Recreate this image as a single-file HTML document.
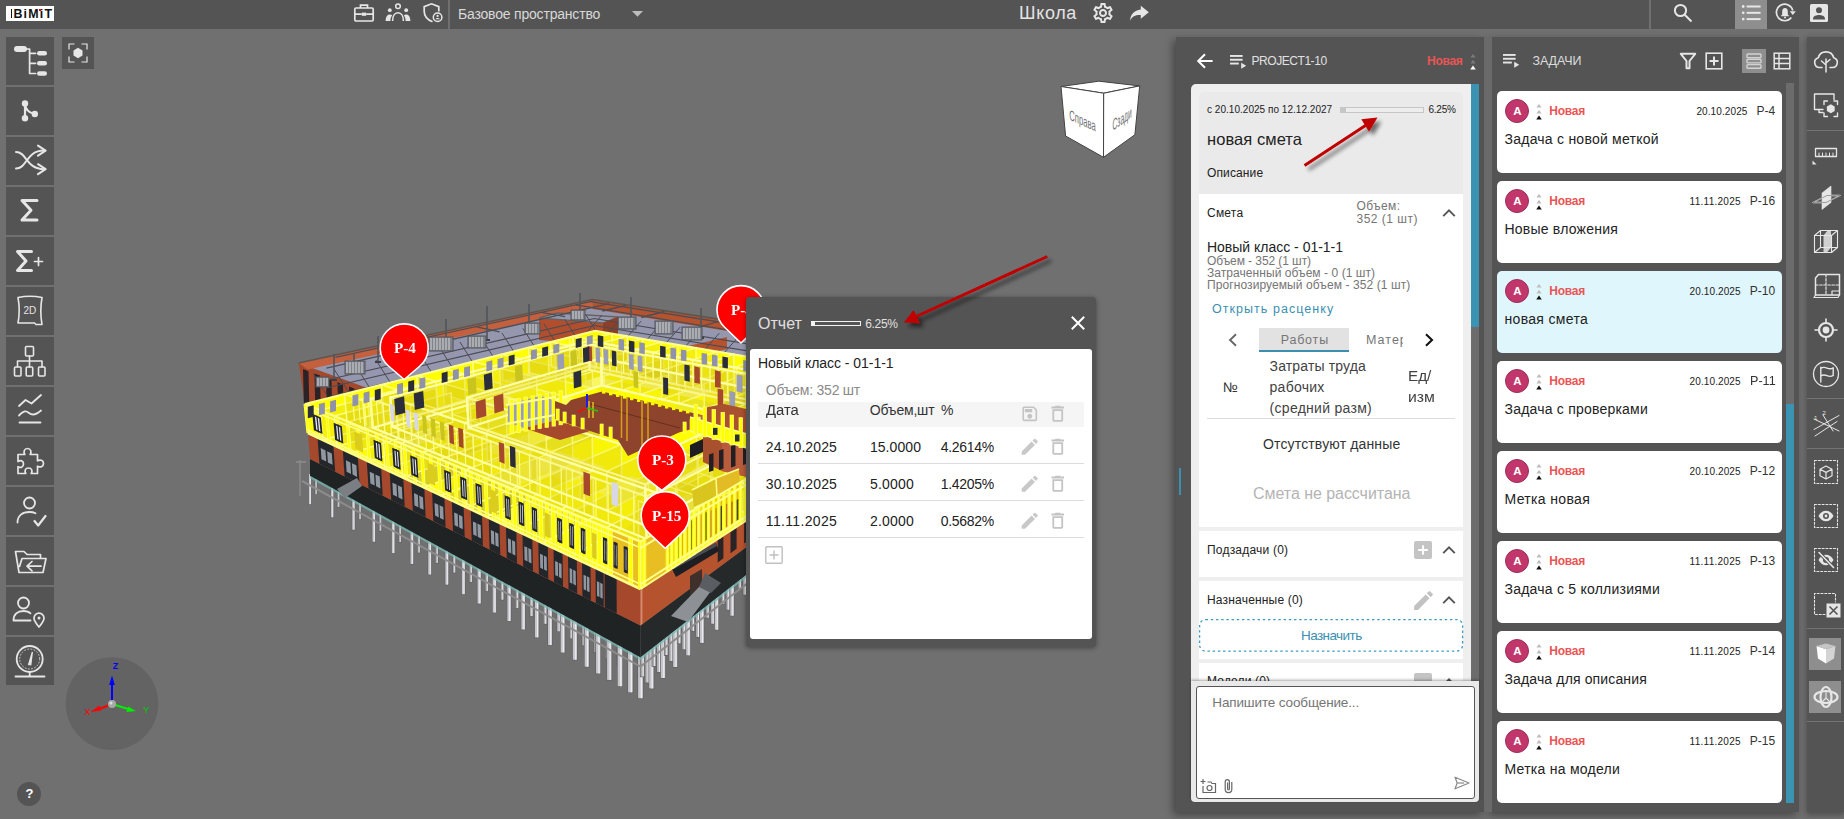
<!DOCTYPE html>
<html lang="ru"><head><meta charset="utf-8"><title>BIMIT</title><style>
*{margin:0;padding:0;box-sizing:border-box}
html,body{width:1844px;height:819px;overflow:hidden;background:#707070;font-family:"Liberation Sans",sans-serif}
.abs{position:absolute}
.t{position:absolute;white-space:nowrap;line-height:1;}
#top{position:absolute;left:0;top:0;width:1844px;height:29px;background:#545454}
.lb{position:absolute;left:6px;width:48px;height:48px;background:#545454}
.lb svg,.rb svg{position:absolute;left:0;top:0}
svg{overflow:visible}
.panel{position:absolute;background:#545454;box-shadow:-3px 3px 8px rgba(0,0,0,.38)}
.card{position:absolute;left:1497px;width:285px;height:82px;background:#fff;border-radius:5px}
.av{position:absolute;left:8px;top:8px;width:24px;height:24px;border-radius:50%;background:#c2376b;border:1px solid #9c2c56}
</style></head><body>
<svg class="abs" style="left:0;top:0" width="1844" height="819" viewBox="0 0 1844 819">
<defs><clipPath id="vp"><rect x="0" y="29" width="1100" height="790"/></clipPath></defs><g clip-path="url(#vp)">
<path d="M316.0 472.0V495.0" stroke="#646464" stroke-width="3.2"/><path d="M316.0 472.0V494.2" stroke="#a9a9ad" stroke-width="1.8"/><path d="M316.3 472.0V494.2" stroke="#ececf2" stroke-width="0.5"/>
<path d="M338.4 484.2V507.8" stroke="#646464" stroke-width="3.3"/><path d="M338.4 484.2V507.0" stroke="#a9a9ad" stroke-width="1.9"/><path d="M338.8 484.2V507.0" stroke="#ececf2" stroke-width="0.6"/>
<path d="M359.9 495.9V520.0" stroke="#646464" stroke-width="3.3"/><path d="M359.9 495.9V519.2" stroke="#a9a9ad" stroke-width="1.9"/><path d="M360.2 495.9V519.2" stroke="#ececf2" stroke-width="0.6"/>
<path d="M380.3 507.1V531.6" stroke="#646464" stroke-width="3.4"/><path d="M380.3 507.1V530.8" stroke="#a9a9ad" stroke-width="2.0"/><path d="M380.7 507.1V530.8" stroke="#ececf2" stroke-width="0.6"/>
<path d="M400.0 517.7V542.8" stroke="#646464" stroke-width="3.5"/><path d="M400.0 517.7V542.0" stroke="#a9a9ad" stroke-width="2.1"/><path d="M400.4 517.7V542.0" stroke="#ececf2" stroke-width="0.6"/>
<path d="M418.8 528.0V553.4" stroke="#646464" stroke-width="3.6"/><path d="M418.8 528.0V552.6" stroke="#a9a9ad" stroke-width="2.2"/><path d="M419.2 528.0V552.6" stroke="#ececf2" stroke-width="0.7"/>
<path d="M436.8 537.8V563.7" stroke="#646464" stroke-width="3.7"/><path d="M436.8 537.8V562.9" stroke="#a9a9ad" stroke-width="2.3"/><path d="M437.3 537.8V562.9" stroke="#ececf2" stroke-width="0.7"/>
<path d="M454.2 547.2V573.4" stroke="#646464" stroke-width="3.8"/><path d="M454.2 547.2V572.6" stroke="#a9a9ad" stroke-width="2.4"/><path d="M454.6 547.2V572.6" stroke="#ececf2" stroke-width="0.7"/>
<path d="M470.8 556.3V582.8" stroke="#646464" stroke-width="3.9"/><path d="M470.8 556.3V582.0" stroke="#a9a9ad" stroke-width="2.5"/><path d="M471.3 556.3V582.0" stroke="#ececf2" stroke-width="0.8"/>
<path d="M486.8 565.0V591.9" stroke="#646464" stroke-width="4.0"/><path d="M486.8 565.0V591.1" stroke="#a9a9ad" stroke-width="2.6"/><path d="M487.3 565.0V591.1" stroke="#ececf2" stroke-width="0.8"/>
<path d="M502.2 573.3V600.5" stroke="#646464" stroke-width="4.1"/><path d="M502.2 573.3V599.7" stroke="#a9a9ad" stroke-width="2.7"/><path d="M502.7 573.3V599.7" stroke="#ececf2" stroke-width="0.8"/>
<path d="M517.1 581.4V608.9" stroke="#646464" stroke-width="4.2"/><path d="M517.1 581.4V608.1" stroke="#a9a9ad" stroke-width="2.8"/><path d="M517.6 581.4V608.1" stroke="#ececf2" stroke-width="0.8"/>
<path d="M531.4 589.2V616.9" stroke="#646464" stroke-width="4.3"/><path d="M531.4 589.2V616.1" stroke="#a9a9ad" stroke-width="2.9"/><path d="M531.9 589.2V616.1" stroke="#ececf2" stroke-width="0.9"/>
<path d="M545.2 596.6V624.6" stroke="#646464" stroke-width="4.4"/><path d="M545.2 596.6V623.8" stroke="#a9a9ad" stroke-width="3.0"/><path d="M545.7 596.6V623.8" stroke="#ececf2" stroke-width="0.9"/>
<path d="M558.5 603.9V632.1" stroke="#646464" stroke-width="4.5"/><path d="M558.5 603.9V631.3" stroke="#a9a9ad" stroke-width="3.1"/><path d="M559.1 603.9V631.3" stroke="#ececf2" stroke-width="0.9"/>
<path d="M571.4 610.8V639.2" stroke="#646464" stroke-width="4.6"/><path d="M571.4 610.8V638.4" stroke="#a9a9ad" stroke-width="3.2"/><path d="M572.0 610.8V638.4" stroke="#ececf2" stroke-width="1.0"/>
<path d="M583.8 617.6V646.1" stroke="#646464" stroke-width="4.7"/><path d="M583.8 617.6V645.3" stroke="#a9a9ad" stroke-width="3.3"/><path d="M584.4 617.6V645.3" stroke="#ececf2" stroke-width="1.0"/>
<path d="M595.9 624.1V652.8" stroke="#646464" stroke-width="4.8"/><path d="M595.9 624.1V652.0" stroke="#a9a9ad" stroke-width="3.4"/><path d="M596.5 624.1V652.0" stroke="#ececf2" stroke-width="1.0"/>
<path d="M607.5 630.4V659.3" stroke="#646464" stroke-width="4.9"/><path d="M607.5 630.4V658.5" stroke="#a9a9ad" stroke-width="3.5"/><path d="M608.1 630.4V658.5" stroke="#ececf2" stroke-width="1.0"/>
<path d="M618.8 636.5V665.5" stroke="#646464" stroke-width="5.0"/><path d="M618.8 636.5V664.7" stroke="#a9a9ad" stroke-width="3.6"/><path d="M619.4 636.5V664.7" stroke="#ececf2" stroke-width="1.1"/>
<path d="M629.7 642.4V671.5" stroke="#646464" stroke-width="5.1"/><path d="M629.7 642.4V670.7" stroke="#a9a9ad" stroke-width="3.7"/><path d="M630.3 642.4V670.7" stroke="#ececf2" stroke-width="1.1"/>
<path d="M640.2 648.1V677.4" stroke="#646464" stroke-width="5.1"/><path d="M640.2 648.1V676.6" stroke="#a9a9ad" stroke-width="3.7"/><path d="M640.9 648.1V676.6" stroke="#ececf2" stroke-width="1.1"/>
<path d="M650.5 653.6V683.0" stroke="#646464" stroke-width="5.2"/><path d="M650.5 653.6V682.2" stroke="#a9a9ad" stroke-width="3.8"/><path d="M651.2 653.6V682.2" stroke="#ececf2" stroke-width="1.2"/>
<path d="M310.0 474.0V505.0" stroke="#646464" stroke-width="3.6"/><path d="M310.0 474.0V504.2" stroke="#c6c6ca" stroke-width="2.2"/><path d="M310.4 474.0V504.2" stroke="#ececf2" stroke-width="0.7"/>
<path d="M332.2 486.2V518.1" stroke="#646464" stroke-width="3.7"/><path d="M332.2 486.2V517.3" stroke="#c6c6ca" stroke-width="2.3"/><path d="M332.7 486.2V517.3" stroke="#ececf2" stroke-width="0.7"/>
<path d="M353.5 497.9V530.5" stroke="#646464" stroke-width="3.8"/><path d="M353.5 497.9V529.7" stroke="#c6c6ca" stroke-width="2.4"/><path d="M353.9 497.9V529.7" stroke="#ececf2" stroke-width="0.7"/>
<path d="M373.8 509.1V542.5" stroke="#646464" stroke-width="4.0"/><path d="M373.8 509.1V541.7" stroke="#c6c6ca" stroke-width="2.6"/><path d="M374.3 509.1V541.7" stroke="#ececf2" stroke-width="0.8"/>
<path d="M393.2 519.7V553.9" stroke="#646464" stroke-width="4.1"/><path d="M393.2 519.7V553.1" stroke="#c6c6ca" stroke-width="2.7"/><path d="M393.7 519.7V553.1" stroke="#ececf2" stroke-width="0.8"/>
<path d="M411.9 530.0V564.8" stroke="#646464" stroke-width="4.2"/><path d="M411.9 530.0V564.0" stroke="#c6c6ca" stroke-width="2.8"/><path d="M412.4 530.0V564.0" stroke="#ececf2" stroke-width="0.8"/>
<path d="M429.7 539.8V575.3" stroke="#646464" stroke-width="4.3"/><path d="M429.7 539.8V574.5" stroke="#c6c6ca" stroke-width="2.9"/><path d="M430.3 539.8V574.5" stroke="#ececf2" stroke-width="0.9"/>
<path d="M446.9 549.2V585.4" stroke="#646464" stroke-width="4.4"/><path d="M446.9 549.2V584.6" stroke="#c6c6ca" stroke-width="3.0"/><path d="M447.4 549.2V584.6" stroke="#ececf2" stroke-width="0.9"/>
<path d="M463.4 558.3V595.0" stroke="#646464" stroke-width="4.5"/><path d="M463.4 558.3V594.2" stroke="#c6c6ca" stroke-width="3.1"/><path d="M463.9 558.3V594.2" stroke="#ececf2" stroke-width="0.9"/>
<path d="M479.2 567.0V604.3" stroke="#646464" stroke-width="4.7"/><path d="M479.2 567.0V603.5" stroke="#c6c6ca" stroke-width="3.3"/><path d="M479.8 567.0V603.5" stroke="#ececf2" stroke-width="1.0"/>
<path d="M494.4 575.3V613.3" stroke="#646464" stroke-width="4.8"/><path d="M494.4 575.3V612.5" stroke="#c6c6ca" stroke-width="3.4"/><path d="M495.0 575.3V612.5" stroke="#ececf2" stroke-width="1.0"/>
<path d="M509.1 583.4V621.9" stroke="#646464" stroke-width="4.9"/><path d="M509.1 583.4V621.1" stroke="#c6c6ca" stroke-width="3.5"/><path d="M509.7 583.4V621.1" stroke="#ececf2" stroke-width="1.1"/>
<path d="M523.2 591.2V630.2" stroke="#646464" stroke-width="5.0"/><path d="M523.2 591.2V629.4" stroke="#c6c6ca" stroke-width="3.6"/><path d="M523.9 591.2V629.4" stroke="#ececf2" stroke-width="1.1"/>
<path d="M536.8 598.6V638.2" stroke="#646464" stroke-width="5.1"/><path d="M536.8 598.6V637.4" stroke="#c6c6ca" stroke-width="3.7"/><path d="M537.5 598.6V637.4" stroke="#ececf2" stroke-width="1.1"/>
<path d="M550.0 605.9V645.9" stroke="#646464" stroke-width="5.3"/><path d="M550.0 605.9V645.1" stroke="#c6c6ca" stroke-width="3.9"/><path d="M550.7 605.9V645.1" stroke="#ececf2" stroke-width="1.2"/>
<path d="M562.7 612.8V653.3" stroke="#646464" stroke-width="5.4"/><path d="M562.7 612.8V652.5" stroke="#c6c6ca" stroke-width="4.0"/><path d="M563.4 612.8V652.5" stroke="#ececf2" stroke-width="1.2"/>
<path d="M574.9 619.6V660.5" stroke="#646464" stroke-width="5.5"/><path d="M574.9 619.6V659.7" stroke="#c6c6ca" stroke-width="4.1"/><path d="M575.7 619.6V659.7" stroke="#ececf2" stroke-width="1.2"/>
<path d="M586.8 626.1V667.5" stroke="#646464" stroke-width="5.6"/><path d="M586.8 626.1V666.7" stroke="#c6c6ca" stroke-width="4.2"/><path d="M587.5 626.1V666.7" stroke="#ececf2" stroke-width="1.3"/>
<path d="M598.2 632.4V674.2" stroke="#646464" stroke-width="5.7"/><path d="M598.2 632.4V673.4" stroke="#c6c6ca" stroke-width="4.3"/><path d="M599.0 632.4V673.4" stroke="#ececf2" stroke-width="1.3"/>
<path d="M609.3 638.5V680.7" stroke="#646464" stroke-width="5.8"/><path d="M609.3 638.5V679.9" stroke="#c6c6ca" stroke-width="4.4"/><path d="M610.1 638.5V679.9" stroke="#ececf2" stroke-width="1.3"/>
<path d="M620.0 644.4V687.0" stroke="#646464" stroke-width="6.0"/><path d="M620.0 644.4V686.2" stroke="#c6c6ca" stroke-width="4.6"/><path d="M620.9 644.4V686.2" stroke="#ececf2" stroke-width="1.4"/>
<path d="M630.4 650.1V693.1" stroke="#646464" stroke-width="6.1"/><path d="M630.4 650.1V692.3" stroke="#c6c6ca" stroke-width="4.7"/><path d="M631.3 650.1V692.3" stroke="#ececf2" stroke-width="1.4"/>
<path d="M640.5 655.6V699.0" stroke="#646464" stroke-width="6.2"/><path d="M640.5 655.6V698.2" stroke="#c6c6ca" stroke-width="4.8"/><path d="M641.4 655.6V698.2" stroke="#ececf2" stroke-width="1.4"/>
<path d="M642.4 646.1V677.2" stroke="#646464" stroke-width="5.0"/><path d="M642.4 646.1V676.4" stroke="#a9a9ad" stroke-width="3.6"/><path d="M643.1 646.1V676.4" stroke="#ececf2" stroke-width="1.1"/>
<path d="M647.4 646.1V683.2" stroke="#646464" stroke-width="5.4"/><path d="M647.4 646.1V682.4" stroke="#b6b6ba" stroke-width="4.0"/><path d="M648.2 646.1V682.4" stroke="#ececf2" stroke-width="1.2"/>
<path d="M651.4 647.1V689.2" stroke="#646464" stroke-width="5.8"/><path d="M651.4 647.1V688.4" stroke="#c6c6ca" stroke-width="4.4"/><path d="M652.2 647.1V688.4" stroke="#ececf2" stroke-width="1.3"/>
<path d="M654.0 637.1V666.8" stroke="#646464" stroke-width="4.8"/><path d="M654.0 637.1V666.0" stroke="#a9a9ad" stroke-width="3.4"/><path d="M654.6 637.1V666.0" stroke="#ececf2" stroke-width="1.0"/>
<path d="M659.0 637.1V672.8" stroke="#646464" stroke-width="5.3"/><path d="M659.0 637.1V672.0" stroke="#b6b6ba" stroke-width="3.9"/><path d="M659.7 637.1V672.0" stroke="#ececf2" stroke-width="1.2"/>
<path d="M663.0 638.1V678.8" stroke="#646464" stroke-width="5.7"/><path d="M663.0 638.1V678.0" stroke="#c6c6ca" stroke-width="4.3"/><path d="M663.8 638.1V678.0" stroke="#ececf2" stroke-width="1.3"/>
<path d="M666.2 627.5V655.8" stroke="#646464" stroke-width="4.7"/><path d="M666.2 627.5V655.0" stroke="#a9a9ad" stroke-width="3.3"/><path d="M666.8 627.5V655.0" stroke="#ececf2" stroke-width="1.0"/>
<path d="M671.2 627.5V661.8" stroke="#646464" stroke-width="5.1"/><path d="M671.2 627.5V661.0" stroke="#b6b6ba" stroke-width="3.7"/><path d="M671.9 627.5V661.0" stroke="#ececf2" stroke-width="1.1"/>
<path d="M675.2 628.5V667.8" stroke="#646464" stroke-width="5.5"/><path d="M675.2 628.5V667.0" stroke="#c6c6ca" stroke-width="4.1"/><path d="M676.0 628.5V667.0" stroke="#ececf2" stroke-width="1.2"/>
<path d="M679.2 617.4V644.1" stroke="#646464" stroke-width="4.6"/><path d="M679.2 617.4V643.3" stroke="#a9a9ad" stroke-width="3.2"/><path d="M679.7 617.4V643.3" stroke="#ececf2" stroke-width="1.0"/>
<path d="M684.2 617.4V650.1" stroke="#646464" stroke-width="5.0"/><path d="M684.2 617.4V649.3" stroke="#b6b6ba" stroke-width="3.6"/><path d="M684.8 617.4V649.3" stroke="#ececf2" stroke-width="1.1"/>
<path d="M688.2 618.4V656.1" stroke="#646464" stroke-width="5.4"/><path d="M688.2 618.4V655.3" stroke="#c6c6ca" stroke-width="4.0"/><path d="M688.9 618.4V655.3" stroke="#ececf2" stroke-width="1.2"/>
<path d="M692.9 606.7V631.7" stroke="#646464" stroke-width="4.4"/><path d="M692.9 606.7V630.9" stroke="#a9a9ad" stroke-width="3.0"/><path d="M693.5 606.7V630.9" stroke="#ececf2" stroke-width="0.9"/>
<path d="M697.9 606.7V637.7" stroke="#646464" stroke-width="4.8"/><path d="M697.9 606.7V636.9" stroke="#b6b6ba" stroke-width="3.4"/><path d="M698.5 606.7V636.9" stroke="#ececf2" stroke-width="1.0"/>
<path d="M701.9 607.7V643.7" stroke="#646464" stroke-width="5.2"/><path d="M701.9 607.7V642.9" stroke="#c6c6ca" stroke-width="3.8"/><path d="M702.6 607.7V642.9" stroke="#ececf2" stroke-width="1.1"/>
<path d="M707.6 595.3V618.5" stroke="#646464" stroke-width="4.3"/><path d="M707.6 595.3V617.7" stroke="#a9a9ad" stroke-width="2.9"/><path d="M708.1 595.3V617.7" stroke="#ececf2" stroke-width="0.9"/>
<path d="M712.6 595.3V624.5" stroke="#646464" stroke-width="4.7"/><path d="M712.6 595.3V623.7" stroke="#b6b6ba" stroke-width="3.3"/><path d="M713.1 595.3V623.7" stroke="#ececf2" stroke-width="1.0"/>
<path d="M716.6 596.3V630.5" stroke="#646464" stroke-width="5.0"/><path d="M716.6 596.3V629.7" stroke="#c6c6ca" stroke-width="3.6"/><path d="M717.2 596.3V629.7" stroke="#ececf2" stroke-width="1.1"/>
<path d="M723.1 583.1V604.5" stroke="#646464" stroke-width="4.2"/><path d="M723.1 583.1V603.7" stroke="#a9a9ad" stroke-width="2.8"/><path d="M723.6 583.1V603.7" stroke="#ececf2" stroke-width="0.8"/>
<path d="M728.1 583.1V610.5" stroke="#646464" stroke-width="4.5"/><path d="M728.1 583.1V609.7" stroke="#b6b6ba" stroke-width="3.1"/><path d="M728.7 583.1V609.7" stroke="#ececf2" stroke-width="0.9"/>
<path d="M732.1 584.1V616.5" stroke="#646464" stroke-width="4.9"/><path d="M732.1 584.1V615.7" stroke="#c6c6ca" stroke-width="3.5"/><path d="M732.8 584.1V615.7" stroke="#ececf2" stroke-width="1.0"/>
<path d="M739.8 570.1V589.5" stroke="#646464" stroke-width="4.1"/><path d="M739.8 570.1V588.7" stroke="#a9a9ad" stroke-width="2.7"/><path d="M740.3 570.1V588.7" stroke="#ececf2" stroke-width="0.8"/>
<path d="M744.8 570.1V595.5" stroke="#646464" stroke-width="4.4"/><path d="M744.8 570.1V594.7" stroke="#b6b6ba" stroke-width="3.0"/><path d="M745.3 570.1V594.7" stroke="#ececf2" stroke-width="0.9"/>
<path d="M748.8 571.1V601.5" stroke="#646464" stroke-width="4.7"/><path d="M748.8 571.1V600.7" stroke="#c6c6ca" stroke-width="3.3"/><path d="M749.4 571.1V600.7" stroke="#ececf2" stroke-width="1.0"/>
<path d="M757.6 556.2V573.5" stroke="#646464" stroke-width="3.9"/><path d="M757.6 556.2V572.7" stroke="#a9a9ad" stroke-width="2.5"/><path d="M758.0 556.2V572.7" stroke="#ececf2" stroke-width="0.8"/>
<path d="M762.6 556.2V579.5" stroke="#646464" stroke-width="4.2"/><path d="M762.6 556.2V578.7" stroke="#b6b6ba" stroke-width="2.8"/><path d="M763.1 556.2V578.7" stroke="#ececf2" stroke-width="0.9"/>
<path d="M766.6 557.2V585.5" stroke="#646464" stroke-width="4.6"/><path d="M766.6 557.2V584.7" stroke="#c6c6ca" stroke-width="3.2"/><path d="M767.2 557.2V584.7" stroke="#ececf2" stroke-width="0.9"/>
<path d="M302.0 481.0L640.5 666.6L906.7 459.0" fill="none" stroke="#8c8c8c" stroke-width="2"/>
<path d="M300.0 460.0v36M296.0 462.0h10" fill="none" stroke="#8c8c8c" stroke-width="1.400"/>
<polygon points="310.0,459.0 640.5,625.5 640.5,657.6 310.0,476.0" fill="#1f2323"/>
<polygon points="640.5,625.5 906.7,428.5 906.7,450.0 640.5,657.6" fill="#26292a"/>
<path d="M310.0 477.0L640.5 658.6L906.7 451.0" fill="none" stroke="#76bab5" stroke-width="2.2" opacity=".7"/>
<polygon points="308.0,433.0 640.5,589.0 640.5,625.5 310.0,459.0" fill="#a5482c"/>
<polygon points="317.5,437.4 333.3,444.9 335.2,471.7 319.4,463.7" fill="#23272b"/>
<polygon points="320.7,448.1 325.5,450.4 326.3,461.6 321.5,459.2" fill="#9097a0"/>
<polygon points="327.1,451.2 331.8,453.5 332.6,464.7 327.9,462.4" fill="#9097a0"/>
<polygon points="342.8,449.3 357.8,456.4 359.5,484.0 344.6,476.4" fill="#23272b"/>
<polygon points="345.9,460.2 350.4,462.4 351.1,473.9 346.6,471.7" fill="#9097a0"/>
<polygon points="351.9,463.2 356.4,465.3 357.1,476.9 352.6,474.6" fill="#9097a0"/>
<polygon points="366.8,460.6 381.1,467.3 382.7,495.6 368.5,488.5" fill="#23272b"/>
<polygon points="369.7,471.7 374.0,473.8 374.7,485.6 370.4,483.5" fill="#9097a0"/>
<polygon points="375.4,474.5 379.7,476.5 380.4,488.4 376.1,486.3" fill="#9097a0"/>
<polygon points="389.7,471.3 403.3,477.7 404.7,506.7 391.2,499.9" fill="#23272b"/>
<polygon points="392.4,482.7 396.5,484.6 397.1,496.7 393.0,494.7" fill="#9097a0"/>
<polygon points="397.8,485.3 401.9,487.2 402.5,499.4 398.5,497.4" fill="#9097a0"/>
<polygon points="411.4,481.5 424.3,487.6 425.6,517.3 412.8,510.8" fill="#23272b"/>
<polygon points="414.0,493.0 417.9,494.9 418.4,507.3 414.5,505.4" fill="#9097a0"/>
<polygon points="419.2,495.5 423.0,497.4 423.6,509.8 419.7,507.9" fill="#9097a0"/>
<polygon points="432.1,491.2 444.4,497.0 445.6,527.3 433.3,521.1" fill="#23272b"/>
<polygon points="434.5,503.0 438.3,504.7 438.8,517.4 435.1,515.5" fill="#9097a0"/>
<polygon points="439.5,505.3 443.2,507.1 443.7,519.8 440.0,518.0" fill="#9097a0"/>
<polygon points="451.8,500.5 463.6,506.0 464.7,536.9 453.0,531.0" fill="#23272b"/>
<polygon points="454.1,512.4 457.7,514.1 458.2,527.0 454.6,525.2" fill="#9097a0"/>
<polygon points="458.9,514.7 462.4,516.4 462.8,529.3 459.3,527.6" fill="#9097a0"/>
<polygon points="470.7,509.3 482.0,514.6 482.9,546.1 471.7,540.5" fill="#23272b"/>
<polygon points="472.9,521.4 476.3,523.0 476.7,536.2 473.3,534.5" fill="#9097a0"/>
<polygon points="477.4,523.6 480.7,525.2 481.1,538.4 477.8,536.8" fill="#9097a0"/>
<polygon points="488.7,517.8 499.5,522.8 500.3,554.9 489.6,549.5" fill="#23272b"/>
<polygon points="490.8,530.0 494.0,531.6 494.4,545.0 491.2,543.4" fill="#9097a0"/>
<polygon points="495.1,532.1 498.3,533.7 498.7,547.1 495.5,545.5" fill="#9097a0"/>
<polygon points="505.9,525.9 516.3,530.7 517.0,563.3 506.8,558.1" fill="#23272b"/>
<polygon points="507.9,538.3 511.0,539.8 511.3,553.4 508.2,551.9" fill="#9097a0"/>
<polygon points="512.0,540.3 515.1,541.8 515.4,555.4 512.4,553.9" fill="#9097a0"/>
<polygon points="522.5,533.6 532.3,538.3 533.0,571.3 523.2,566.4" fill="#23272b"/>
<polygon points="524.3,546.2 527.3,547.6 527.6,561.4 524.6,560.0" fill="#9097a0"/>
<polygon points="528.3,548.1 531.2,549.5 531.5,563.4 528.6,561.9" fill="#9097a0"/>
<polygon points="538.3,541.0 547.8,545.5 548.3,579.1 538.9,574.3" fill="#23272b"/>
<polygon points="540.0,553.8 542.9,555.1 543.1,569.2 540.3,567.8" fill="#9097a0"/>
<polygon points="543.8,555.6 546.7,556.9 546.9,571.0 544.1,569.6" fill="#9097a0"/>
<polygon points="553.5,548.2 562.6,552.4 563.0,586.5 554.0,581.9" fill="#23272b"/>
<polygon points="555.1,561.0 557.9,562.3 558.1,576.6 555.3,575.2" fill="#9097a0"/>
<polygon points="558.8,562.8 561.5,564.1 561.7,578.4 559.0,577.0" fill="#9097a0"/>
<polygon points="568.0,555.0 576.8,559.1 577.2,593.6 568.5,589.2" fill="#23272b"/>
<polygon points="569.6,568.0 572.2,569.3 572.4,583.7 569.8,582.4" fill="#9097a0"/>
<polygon points="573.1,569.7 575.7,570.9 575.9,585.4 573.3,584.1" fill="#9097a0"/>
<polygon points="582.1,561.6 590.5,565.5 590.8,600.4 582.4,596.2" fill="#23272b"/>
<polygon points="583.5,574.7 586.1,575.9 586.2,590.5 583.7,589.3" fill="#9097a0"/>
<polygon points="586.9,576.3 589.4,577.5 589.5,592.2 587.0,590.9" fill="#9097a0"/>
<polygon points="595.5,567.9 603.6,571.7 603.8,607.0 595.8,603.0" fill="#23272b"/>
<polygon points="596.9,581.2 599.4,582.3 599.5,597.1 597.0,595.9" fill="#9097a0"/>
<polygon points="600.2,582.7 602.6,583.9 602.7,598.7 600.3,597.5" fill="#9097a0"/>
<polygon points="604.6,572.2 616.6,577.8 616.7,613.5 604.8,607.5" fill="#202426"/>
<polygon points="640.5,589.0 906.7,416.5 906.7,428.5 640.5,625.5" fill="#b5532f"/>
<polygon points="640.5,589.0 642.4,587.8 642.4,624.1 640.5,625.5" fill="#d9886a"/>
<polygon points="717.7,540.4 723.4,536.7 723.4,558.3 717.7,562.5" fill="#2a2426"/>
<polygon points="730.5,532.1 736.6,528.1 736.6,548.8 730.5,553.2" fill="#2a2426"/>
<polygon points="744.1,523.2 750.5,519.0 750.5,538.8 744.1,543.4" fill="#2a2426"/>
<polygon points="758.4,513.9 763.8,510.3 763.8,529.2 758.4,533.1" fill="#2a2426"/>
<polygon points="671,567 716,543 719,551 676,577" fill="#1d1f22"/><polygon points="673,566 716,543 717,546 674,569" fill="#4a4c52"/>
<polygon points="690,576 702,569 702,597 690,604" fill="#40302b"/>
<polygon points="671,616 699,587 711,579 711,591 688,622" fill="#8d9196"/>
<polygon points="699,587 705,573 721,583 711,593" fill="#5a5d62"/>
<polygon points="337,489 357,478 362,486 345,498" fill="#7b7f84"/>
<polygon points="298.6,363.0 640.5,487.0 640.5,541.6 305.0,404.0" fill="#a5482c"/>
<polygon points="298.6,363.0 592.3,299.5 905.0,348.0 905.0,470.0 640.5,487.0" fill="#9597af"/>
<polygon points="298.6,363.0 592.3,299.5 592.3,308.0 307.6,369.5" fill="#c4603e"/>
<polygon points="592.3,299.5 905.0,348.0 905.0,360.0 592.3,309.0" fill="#b5532f"/>
<path d="M298.6 363L592.3 299.5L905 348" fill="none" stroke="#5c5550" stroke-width="1.6"/>
<polygon points="303.0,369.0 308.5,371.2 309.3,405.0 303.8,402.5" fill="#2a2226"/>
<polygon points="314.5,373.4 320.0,375.6 320.8,409.8 315.3,407.3" fill="#2a2226"/>
<polygon points="326.0,377.8 331.5,380.0 332.3,414.6 326.8,412.1" fill="#2a2226"/>
<polygon points="337.5,382.2 343.0,384.4 343.8,419.4 338.3,416.9" fill="#2a2226"/>
<polygon points="349.0,386.6 354.5,388.8 355.3,424.2 349.8,421.7" fill="#2a2226"/>
<polygon points="360.5,391.0 366.0,393.2 366.8,429.0 361.3,426.5" fill="#2a2226"/>
<polygon points="539,318 603,323 603,345 539,340" fill="#b04e2e"/>
<polygon points="539,318 557,313 618,317 603,323" fill="#9597af" stroke="#6a625e" stroke-width="1.300"/>
<polygon points="603,323 618,317 618,336 603,345" fill="#8e3f27"/>
<polygon points="688,346 727,337 727,349 692,357" fill="#b5532f"/>
<path d="M335.3 357.4L592.7 301.1" stroke="#4c4e55" stroke-width="1.3"/>
<path d="M326.4 368.1L609.1 303.7" stroke="#4c4e55" stroke-width="1.3"/>
<path d="M475.8 326.7L499.6 331.9" stroke="#4c4e55" stroke-width="1.3"/>
<path d="M397.7 343.8L421.0 350.1" stroke="#4c4e55" stroke-width="1.3"/>
<path d="M541.3 312.4L565.1 316.7" stroke="#4c4e55" stroke-width="1.3"/>
<path d="M590.6 301.6L858.3 343.9" stroke="#4c4e55" stroke-width="1.3"/>
<path d="M575.7 304.8L846.1 349.5" stroke="#4c4e55" stroke-width="1.3"/>
<path d="M641.3 317.5L664.3 311.5" stroke="#4c4e55" stroke-width="1.3"/>
<path d="M699.4 327.2L721.6 320.5" stroke="#4c4e55" stroke-width="1.3"/>
<path d="M602.3 311.0L625.7 305.5" stroke="#4c4e55" stroke-width="1.3"/>
<path d="M322.2 381.0L594.3 318.5L905.0 370.0" fill="none" stroke="#4a4c54" stroke-width="1.1"/>
<path d="M326.4 388.0L594.3 325.5L905.0 377.0" fill="none" stroke="#4a4c54" stroke-width="1.1"/>
<path d="M331.2 396.0L594.3 333.5L905.0 385.0" fill="none" stroke="#4a4c54" stroke-width="1.1"/>
<path d="M313.1 373.7l14 22" stroke="#4a4c54" stroke-width="1"/>
<path d="M334.1 369.2l14 22" stroke="#4a4c54" stroke-width="1"/>
<path d="M355.0 364.7l14 22" stroke="#4a4c54" stroke-width="1"/>
<path d="M376.0 360.1l14 22" stroke="#4a4c54" stroke-width="1"/>
<path d="M397.0 355.6l14 22" stroke="#4a4c54" stroke-width="1"/>
<path d="M418.0 351.1l14 22" stroke="#4a4c54" stroke-width="1"/>
<path d="M439.0 346.5l14 22" stroke="#4a4c54" stroke-width="1"/>
<path d="M459.9 342.0l14 22" stroke="#4a4c54" stroke-width="1"/>
<path d="M480.9 337.4l14 22" stroke="#4a4c54" stroke-width="1"/>
<path d="M501.9 332.9l14 22" stroke="#4a4c54" stroke-width="1"/>
<path d="M522.9 328.4l14 22" stroke="#4a4c54" stroke-width="1"/>
<path d="M543.9 323.8l14 22" stroke="#4a4c54" stroke-width="1"/>
<path d="M564.8 319.3l14 22" stroke="#4a4c54" stroke-width="1"/>
<path d="M585.8 314.8l14 22" stroke="#4a4c54" stroke-width="1"/>
<path d="M602.1 315.0l-16 18" stroke="#4a4c54" stroke-width="1"/>
<path d="M621.6 318.0l-16 18" stroke="#4a4c54" stroke-width="1"/>
<path d="M641.2 321.1l-16 18" stroke="#4a4c54" stroke-width="1"/>
<path d="M660.7 324.1l-16 18" stroke="#4a4c54" stroke-width="1"/>
<path d="M680.2 327.1l-16 18" stroke="#4a4c54" stroke-width="1"/>
<path d="M699.8 330.2l-16 18" stroke="#4a4c54" stroke-width="1"/>
<path d="M719.3 333.2l-16 18" stroke="#4a4c54" stroke-width="1"/>
<path d="M738.9 336.2l-16 18" stroke="#4a4c54" stroke-width="1"/>
<path d="M334 380V354" stroke="#50555b" stroke-width="1.6"/><path d="M331 380h6" stroke="#3c3f44" stroke-width="2"/>
<path d="M378 362V336" stroke="#50555b" stroke-width="1.6"/><path d="M375 362h6" stroke="#3c3f44" stroke-width="2"/>
<path d="M446 347V319" stroke="#50555b" stroke-width="1.6"/><path d="M443 347h6" stroke="#3c3f44" stroke-width="2"/>
<path d="M487 340V306" stroke="#50555b" stroke-width="1.6"/><path d="M484 340h6" stroke="#3c3f44" stroke-width="2"/>
<path d="M529 326V304" stroke="#50555b" stroke-width="1.6"/><path d="M526 326h6" stroke="#3c3f44" stroke-width="2"/>
<path d="M580 315V293" stroke="#50555b" stroke-width="1.6"/><path d="M577 315h6" stroke="#3c3f44" stroke-width="2"/>
<path d="M631 325V297" stroke="#50555b" stroke-width="1.6"/><path d="M628 325h6" stroke="#3c3f44" stroke-width="2"/>
<path d="M701 338V308" stroke="#50555b" stroke-width="1.6"/><path d="M698 338h6" stroke="#3c3f44" stroke-width="2"/>
<path d="M417 352V334" stroke="#50555b" stroke-width="1.6"/><path d="M414 352h6" stroke="#3c3f44" stroke-width="2"/>
<path d="M354 370V354" stroke="#50555b" stroke-width="1.6"/><path d="M351 370h6" stroke="#3c3f44" stroke-width="2"/>
<rect x="345" y="361" width="20" height="13" fill="#80838a" stroke="#50535a" stroke-width="1"/>
<path d="M347 362v11" stroke="#d4d6da" stroke-width="1"/>
<path d="M350 362v11" stroke="#d4d6da" stroke-width="1"/>
<path d="M353 362v11" stroke="#d4d6da" stroke-width="1"/>
<path d="M356 362v11" stroke="#d4d6da" stroke-width="1"/>
<path d="M359 362v11" stroke="#d4d6da" stroke-width="1"/>
<path d="M362 362v11" stroke="#d4d6da" stroke-width="1"/>
<rect x="429" y="337" width="24" height="14" fill="#80838a" stroke="#50535a" stroke-width="1"/>
<path d="M431 338v12" stroke="#d4d6da" stroke-width="1"/>
<path d="M434 338v12" stroke="#d4d6da" stroke-width="1"/>
<path d="M437 338v12" stroke="#d4d6da" stroke-width="1"/>
<path d="M440 338v12" stroke="#d4d6da" stroke-width="1"/>
<path d="M443 338v12" stroke="#d4d6da" stroke-width="1"/>
<path d="M446 338v12" stroke="#d4d6da" stroke-width="1"/>
<path d="M449 338v12" stroke="#d4d6da" stroke-width="1"/>
<rect x="468" y="336" width="18" height="12" fill="#80838a" stroke="#50535a" stroke-width="1"/>
<path d="M470 337v10" stroke="#d4d6da" stroke-width="1"/>
<path d="M473 337v10" stroke="#d4d6da" stroke-width="1"/>
<path d="M476 337v10" stroke="#d4d6da" stroke-width="1"/>
<path d="M479 337v10" stroke="#d4d6da" stroke-width="1"/>
<path d="M482 337v10" stroke="#d4d6da" stroke-width="1"/>
<rect x="525" y="323" width="15" height="11" fill="#80838a" stroke="#50535a" stroke-width="1"/>
<path d="M527 324v9" stroke="#d4d6da" stroke-width="1"/>
<path d="M530 324v9" stroke="#d4d6da" stroke-width="1"/>
<path d="M533 324v9" stroke="#d4d6da" stroke-width="1"/>
<path d="M536 324v9" stroke="#d4d6da" stroke-width="1"/>
<rect x="571" y="310" width="14" height="10" fill="#80838a" stroke="#50535a" stroke-width="1"/>
<path d="M573 311v8" stroke="#d4d6da" stroke-width="1"/>
<path d="M576 311v8" stroke="#d4d6da" stroke-width="1"/>
<path d="M579 311v8" stroke="#d4d6da" stroke-width="1"/>
<path d="M582 311v8" stroke="#d4d6da" stroke-width="1"/>
<rect x="618" y="317" width="18" height="12" fill="#80838a" stroke="#50535a" stroke-width="1"/>
<path d="M620 318v10" stroke="#d4d6da" stroke-width="1"/>
<path d="M623 318v10" stroke="#d4d6da" stroke-width="1"/>
<path d="M626 318v10" stroke="#d4d6da" stroke-width="1"/>
<path d="M629 318v10" stroke="#d4d6da" stroke-width="1"/>
<path d="M632 318v10" stroke="#d4d6da" stroke-width="1"/>
<rect x="655" y="321" width="18" height="13" fill="#80838a" stroke="#50535a" stroke-width="1"/>
<path d="M657 322v11" stroke="#d4d6da" stroke-width="1"/>
<path d="M660 322v11" stroke="#d4d6da" stroke-width="1"/>
<path d="M663 322v11" stroke="#d4d6da" stroke-width="1"/>
<path d="M666 322v11" stroke="#d4d6da" stroke-width="1"/>
<path d="M669 322v11" stroke="#d4d6da" stroke-width="1"/>
<rect x="682" y="327" width="20" height="13" fill="#80838a" stroke="#50535a" stroke-width="1"/>
<path d="M684 328v11" stroke="#d4d6da" stroke-width="1"/>
<path d="M687 328v11" stroke="#d4d6da" stroke-width="1"/>
<path d="M690 328v11" stroke="#d4d6da" stroke-width="1"/>
<path d="M693 328v11" stroke="#d4d6da" stroke-width="1"/>
<path d="M696 328v11" stroke="#d4d6da" stroke-width="1"/>
<path d="M699 328v11" stroke="#d4d6da" stroke-width="1"/>
<rect x="316" y="377" width="13" height="10" fill="#80838a" stroke="#50535a" stroke-width="1"/>
<path d="M318 378v8" stroke="#d4d6da" stroke-width="1"/>
<path d="M321 378v8" stroke="#d4d6da" stroke-width="1"/>
<path d="M324 378v8" stroke="#d4d6da" stroke-width="1"/>
<path d="M327 378v8" stroke="#d4d6da" stroke-width="1"/>
<rect x="402" y="348" width="11" height="10" fill="#80838a" stroke="#50535a" stroke-width="1"/>
<path d="M404 349v8" stroke="#d4d6da" stroke-width="1"/>
<path d="M407 349v8" stroke="#d4d6da" stroke-width="1"/>
<path d="M410 349v8" stroke="#d4d6da" stroke-width="1"/>
<polygon points="305.0,404.0 595.2,330.8 906.7,383.8 906.7,416.5 640.5,589.0 308.0,433.0" fill="#ffff00"/>
<polygon points="503.7,380.0 518.8,383.9 544.2,376.8 529.0,373.1" fill="#ffff70"/>
<polygon points="575.0,360.7 590.2,363.9 611.1,358.0 596.0,355.0" fill="#ffff50"/>
<polygon points="321.7,439.4 336.1,446.2 376.1,434.5 361.2,428.3" fill="#f6f20a"/>
<polygon points="491.7,391.6 507.5,396.0 534.7,388.1 518.8,383.9" fill="#ffff50"/>
<polygon points="567.9,370.1 583.8,373.7 606.0,367.2 590.2,363.9" fill="#f6f20a"/>
<polygon points="336.1,446.2 351.3,453.3 391.8,441.0 376.1,434.5" fill="#f6f20a"/>
<polygon points="376.1,434.5 391.8,441.0 429.0,429.7 412.9,423.7" fill="#ecec20"/>
<polygon points="478.3,404.6 494.8,409.6 524.0,400.7 507.5,396.0" fill="#ffff70"/>
<polygon points="391.8,441.0 408.4,447.9 445.9,436.0 429.0,429.7" fill="#ffff70"/>
<polygon points="524.0,400.7 541.4,405.6 568.6,396.9 551.2,392.4" fill="#ecec20"/>
<polygon points="576.6,384.7 593.9,388.8 617.5,381.3 600.3,377.4" fill="#ffff70"/>
<polygon points="622.4,370.7 639.6,374.3 660.2,367.7 643.2,364.3" fill="#fbfb3c"/>
<polygon points="367.5,460.9 384.7,469.0 426.0,455.2 408.4,447.9" fill="#f6f20a"/>
<polygon points="480.3,425.0 498.4,431.1 530.2,420.5 512.0,414.9" fill="#ecec20"/>
<polygon points="541.4,405.6 559.6,410.7 586.8,401.6 568.6,396.9" fill="#ffff50"/>
<polygon points="593.9,388.8 612.0,393.2 635.5,385.4 617.5,381.3" fill="#f6f20a"/>
<polygon points="639.6,374.3 657.4,378.1 678.0,371.2 660.2,367.7" fill="#d6cf28"/>
<polygon points="384.7,469.0 402.9,477.5 444.7,462.9 426.0,455.2" fill="#f6f20a"/>
<polygon points="426.0,455.2 444.7,462.9 482.7,449.7 463.8,442.6" fill="#f6f20a"/>
<polygon points="530.2,420.5 549.3,426.3 578.7,416.1 559.6,410.7" fill="#ecec20"/>
<polygon points="586.8,401.6 605.8,406.6 631.0,397.8 612.0,393.2" fill="#ffff50"/>
<polygon points="635.5,385.4 654.3,389.6 676.1,382.0 657.4,378.1" fill="#ffff70"/>
<polygon points="657.4,378.1 676.1,382.0 696.4,374.9 678.0,371.2" fill="#ffff70"/>
<polygon points="402.9,477.5 422.4,486.7 464.5,471.2 444.7,462.9" fill="#d6cf28"/>
<polygon points="482.7,449.7 502.7,457.1 537.6,444.3 517.4,437.5" fill="#ffff50"/>
<polygon points="517.4,437.5 537.6,444.3 569.5,432.5 549.3,426.3" fill="#ffff50"/>
<polygon points="578.7,416.1 598.8,421.7 625.8,411.8 605.8,406.6" fill="#fbfb3c"/>
<polygon points="654.3,389.6 674.0,394.1 695.6,386.1 676.1,382.0" fill="#f6f20a"/>
<polygon points="676.1,382.0 695.6,386.1 715.7,378.7 696.4,374.9" fill="#ffff50"/>
<polygon points="537.6,444.3 558.9,451.5 590.8,439.1 569.5,432.5" fill="#ecec20"/>
<polygon points="569.5,432.5 590.8,439.1 620.0,427.7 598.8,421.7" fill="#e0d81e"/>
<polygon points="598.8,421.7 620.0,427.7 646.9,417.3 625.8,411.8" fill="#ffff70"/>
<polygon points="625.8,411.8 646.9,417.3 671.7,407.6 650.8,402.6" fill="#e0d81e"/>
<polygon points="650.8,402.6 671.7,407.6 694.7,398.7 674.0,394.1" fill="#f6f20a"/>
<polygon points="674.0,394.1 694.7,398.7 716.0,390.4 695.6,386.1" fill="#ffff70"/>
<polygon points="443.2,496.4 465.4,506.9 508.1,489.3 485.6,479.9" fill="#e0d81e"/>
<polygon points="485.6,479.9 508.1,489.3 546.6,473.4 524.0,465.0" fill="#ffff50"/>
<polygon points="524.0,465.0 546.6,473.4 581.5,459.1 558.9,451.5" fill="#ffff70"/>
<polygon points="646.9,417.3 669.0,423.0 693.6,412.9 671.7,407.6" fill="#ecec20"/>
<polygon points="671.7,407.6 693.6,412.9 716.3,403.6 694.7,398.7" fill="#ecec20"/>
<polygon points="716.0,390.4 737.4,394.9 757.0,386.9 735.9,382.7" fill="#ecec20"/>
<polygon points="465.4,506.9 489.3,518.1 532.2,499.3 508.1,489.3" fill="#d6cf28"/>
<polygon points="546.6,473.4 570.7,482.4 605.6,467.2 581.5,459.1" fill="#ffff50"/>
<polygon points="669.0,423.0 692.4,429.1 716.7,418.5 693.6,412.9" fill="#f6f20a"/>
<polygon points="716.3,403.6 739.1,408.7 759.8,399.6 737.4,394.9" fill="#d6cf28"/>
<polygon points="489.3,518.1 515.0,530.1 558.0,510.0 532.2,499.3" fill="#fbfb3c"/>
<polygon points="692.4,429.1 717.1,435.6 741.0,424.4 716.7,418.5" fill="#ffff50"/>
<polygon points="515.0,530.1 542.7,543.1 585.7,521.5 558.0,510.0" fill="#ecec20"/>
<polygon points="596.5,492.0 624.0,502.2 658.4,485.0 631.1,475.8" fill="#ffff50"/>
<polygon points="662.5,461.1 689.4,469.4 717.6,455.2 691.0,447.8" fill="#ecec20"/>
<polygon points="691.0,447.8 717.6,455.2 743.2,442.4 717.1,435.6" fill="#ffff70"/>
<polygon points="741.0,424.4 766.6,430.6 788.2,419.8 763.0,414.1" fill="#e0d81e"/>
<polygon points="763.0,414.1 788.2,419.8 808.0,409.8 783.3,404.6" fill="#ffff50"/>
<polygon points="658.4,485.0 687.5,494.8 718.1,478.2 689.4,469.4" fill="#f6f20a"/>
<polygon points="743.2,442.4 770.9,449.6 793.7,437.1 766.6,430.6" fill="#e0d81e"/>
<polygon points="788.2,419.8 814.7,425.7 834.0,415.3 808.0,409.8" fill="#d6cf28"/>
<polygon points="808.0,409.8 834.0,415.3 851.8,405.6 826.3,400.6" fill="#f6f20a"/>
<polygon points="615.5,533.9 647.7,547.2 685.3,525.0 653.5,513.2" fill="#f6f20a"/>
<polygon points="653.5,513.2 685.3,525.0 718.8,505.3 687.5,494.8" fill="#ffff70"/>
<polygon points="687.5,494.8 718.8,505.3 748.7,487.6 718.1,478.2" fill="#f6f20a"/>
<polygon points="834.0,415.3 861.4,421.1 878.5,410.9 851.8,405.6" fill="#d6cf28"/>
<polygon points="647.7,547.2 682.6,561.7 719.5,537.8 685.3,525.0" fill="#fbfb3c"/>
<polygon points="685.3,525.0 719.5,537.8 752.3,516.6 718.8,505.3" fill="#fbfb3c"/>
<polygon points="718.8,505.3 752.3,516.6 781.5,497.6 748.7,487.6" fill="#ffff50"/>
<polygon points="800.2,457.2 831.4,465.3 852.8,451.4 822.4,444.1" fill="#ffff70"/>
<polygon points="822.4,444.1 852.8,451.4 872.4,438.7 842.7,432.1" fill="#f6f20a"/>
<polygon points="842.7,432.1 872.4,438.7 890.3,427.1 861.4,421.1" fill="#d6cf28"/>
<polygon points="861.4,421.1 890.3,427.1 906.7,416.5 878.5,410.9" fill="#e0d81e"/>
<polygon points="617.0,345.9 642.3,338.8 642.8,364.3 617.7,371.9" fill="#dccd1c" opacity="0.3"/>
<path d="M617.0 345.9L642.3 338.8L642.8 364.3L617.7 371.9Z" stroke="#ffff8a" stroke-width="1.5" fill="none"/>
<polygon points="366.3,429.2 415.4,414.6 417.2,445.8 368.5,461.4" fill="#dccd1c" opacity="0.3"/>
<path d="M366.3 429.2L415.4 414.6L417.2 445.8L368.5 461.4Z" stroke="#ffff8a" stroke-width="1.5" fill="none"/>
<polygon points="709.6,363.0 733.8,354.4 733.8,382.3 709.8,391.6" fill="#dccd1c" opacity="0.3"/>
<path d="M709.6 363.0L733.8 354.4L733.8 382.3L709.8 391.6Z" stroke="#ffff8a" stroke-width="1.5" fill="none"/>
<polygon points="704.1,379.2 727.2,370.4 727.3,399.9 704.3,409.4" fill="#dccd1c" opacity="0.3"/>
<path d="M704.1 379.2L727.2 370.4L727.3 399.9L704.3 409.4Z" stroke="#ffff8a" stroke-width="1.5" fill="none"/>
<polygon points="570.3,512.8 621.3,487.6 621.5,528.7 570.6,556.2" fill="#dccd1c" opacity="0.3"/>
<path d="M570.3 512.8L621.3 487.6L621.5 528.7L570.6 556.2Z" stroke="#ffff8a" stroke-width="1.5" fill="none"/>
<polygon points="444.7,368.8 464.1,373.9 465.7,401.4 446.5,395.5" fill="#dccd1c" opacity="0.3"/>
<path d="M444.7 368.8L464.1 373.9L465.7 401.4L446.5 395.5Z" stroke="#ffff8a" stroke-width="1.5" fill="none"/>
<polygon points="530.4,445.3 572.2,429.4 572.8,463.7 531.2,480.9" fill="#dccd1c" opacity="0.3"/>
<path d="M530.4 445.3L572.2 429.4L572.8 463.7L531.2 480.9Z" stroke="#ffff8a" stroke-width="1.5" fill="none"/>
<polygon points="383.1,436.0 432.6,420.7 434.2,452.7 385.0,469.1" fill="#dccd1c" opacity="0.3"/>
<path d="M383.1 436.0L432.6 420.7L434.2 452.7L385.0 469.1Z" stroke="#ffff8a" stroke-width="1.5" fill="none"/>
<polygon points="775.4,393.6 797.2,383.5 797.2,415.2 775.4,426.1" fill="#dccd1c" opacity="0.3"/>
<path d="M775.4 393.6L797.2 383.5L797.2 415.2L775.4 426.1Z" stroke="#ffff8a" stroke-width="1.5" fill="none"/>
<polygon points="603.9,358.8 628.1,351.7 628.6,378.3 604.5,386.0" fill="#dccd1c" opacity="0.3"/>
<path d="M603.9 358.8L628.1 351.7L628.6 378.3L604.5 386.0Z" stroke="#ffff8a" stroke-width="1.5" fill="none"/>
<polygon points="639.8,366.1 663.7,358.4 664.0,386.1 640.2,394.4" fill="#dccd1c" opacity="0.3"/>
<path d="M639.8 366.1L663.7 358.4L664.0 386.1L640.2 394.4Z" stroke="#ffff8a" stroke-width="1.5" fill="none"/>
<polygon points="791.2,420.0 830.6,428.9 830.7,465.8 791.2,455.5" fill="#dccd1c" opacity="0.3"/>
<path d="M791.2 420.0L830.6 428.9L830.7 465.8L791.2 455.5Z" stroke="#ffff8a" stroke-width="1.5" fill="none"/>
<polygon points="670.4,493.0 710.6,471.2 710.7,511.5 670.5,535.3" fill="#dccd1c" opacity="0.3"/>
<path d="M670.4 493.0L710.6 471.2L710.7 511.5L670.5 535.3Z" stroke="#ffff8a" stroke-width="1.5" fill="none"/>
<polygon points="446.1,416.6 487.4,403.8 488.7,434.6 447.6,448.3" fill="#dccd1c" opacity="0.3"/>
<path d="M446.1 416.6L487.4 403.8L488.7 434.6L447.6 448.3Z" stroke="#ffff8a" stroke-width="1.5" fill="none"/>
<polygon points="676.9,480.4 720.2,494.4 720.2,537.4 677.0,521.3" fill="#dccd1c" opacity="0.3"/>
<path d="M676.9 480.4L720.2 494.4L720.2 537.4L677.0 521.3Z" stroke="#ffff8a" stroke-width="1.5" fill="none"/>
<polygon points="753.2,371.0 776.5,361.6 776.5,390.7 753.2,400.8" fill="#dccd1c" opacity="0.3"/>
<path d="M753.2 371.0L776.5 361.6L776.5 390.7L753.2 400.8Z" stroke="#ffff8a" stroke-width="1.5" fill="none"/>
<polygon points="585.0,355.0 609.3,348.1 610.0,374.2 585.8,381.6" fill="#dccd1c" opacity="0.3"/>
<path d="M585.0 355.0L609.3 348.1L610.0 374.2L585.8 381.6Z" stroke="#ffff8a" stroke-width="1.5" fill="none"/>
<polygon points="485.7,478.1 536.8,457.6 537.4,494.6 486.5,516.8" fill="#dccd1c" opacity="0.3"/>
<path d="M485.7 478.1L536.8 457.6L537.4 494.6L486.5 516.8Z" stroke="#ffff8a" stroke-width="1.5" fill="none"/>
<polygon points="671.3,355.9 696.0,347.9 696.2,374.8 671.6,383.4" fill="#dccd1c" opacity="0.3"/>
<path d="M671.3 355.9L696.0 347.9L696.2 374.8L671.6 383.4Z" stroke="#ffff8a" stroke-width="1.5" fill="none"/>
<polygon points="572.9,336.4 592.5,340.0 593.3,365.1 573.9,361.0" fill="#dccd1c" opacity="0.3"/>
<path d="M572.9 336.4L592.5 340.0L593.3 365.1L573.9 361.0Z" stroke="#ffff8a" stroke-width="1.5" fill="none"/>
<polygon points="554.3,348.8 578.7,342.4 579.5,367.6 555.3,374.4" fill="#dccd1c" opacity="0.3"/>
<path d="M554.3 348.8L578.7 342.4L579.5 367.6L555.3 374.4Z" stroke="#ffff8a" stroke-width="1.5" fill="none"/>
<polygon points="579.9,462.2 621.4,444.3 621.7,480.7 580.3,500.1" fill="#dccd1c" opacity="0.3"/>
<path d="M579.9 462.2L621.4 444.3L621.7 480.7L580.3 500.1Z" stroke="#ffff8a" stroke-width="1.5" fill="none"/>
<polygon points="501.5,354.4 521.1,358.9 522.3,385.3 502.9,380.2" fill="#dccd1c" opacity="0.3"/>
<path d="M501.5 354.4L521.1 358.9L522.3 385.3L502.9 380.2Z" stroke="#ffff8a" stroke-width="1.5" fill="none"/>
<polygon points="775.3,399.1 802.1,404.7 802.1,438.7 775.3,432.2" fill="#dccd1c" opacity="0.3"/>
<path d="M775.3 399.1L802.1 404.7L802.1 438.7L775.3 432.2Z" stroke="#ffff8a" stroke-width="1.5" fill="none"/>
<polygon points="381.5,384.7 400.4,390.8 402.4,419.4 383.8,412.5" fill="#dccd1c" opacity="0.3"/>
<path d="M381.5 384.7L400.4 390.8L402.4 419.4L383.8 412.5Z" stroke="#ffff8a" stroke-width="1.5" fill="none"/>
<polygon points="815.0,407.4 853.4,415.4 853.4,451.0 815.0,441.8" fill="#dccd1c" opacity="0.3"/>
<path d="M815.0 407.4L853.4 415.4L853.4 451.0L815.0 441.8Z" stroke="#ffff8a" stroke-width="1.5" fill="none"/>
<polygon points="443.0,383.4 479.4,394.0 480.8,423.7 444.7,411.7" fill="#dccd1c" opacity="0.3"/>
<path d="M443.0 383.4L479.4 394.0L480.8 423.7L444.7 411.7Z" stroke="#ffff8a" stroke-width="1.5" fill="none"/>
<polygon points="555.3,353.2 592.1,360.9 592.8,388.2 556.3,379.4" fill="#dccd1c" opacity="0.3"/>
<path d="M555.3 353.2L592.1 360.9L592.8 388.2L556.3 379.4Z" stroke="#ffff8a" stroke-width="1.5" fill="none"/>
<polygon points="320.2,410.2 367.7,397.7 370.1,426.7 322.9,440.0" fill="#dccd1c" opacity="0.3"/>
<path d="M320.2 410.2L367.7 397.7L370.1 426.7L322.9 440.0Z" stroke="#ffff8a" stroke-width="1.5" fill="none"/>
<polygon points="395.5,399.4 436.1,388.3 437.8,417.0 397.6,428.8" fill="#dccd1c" opacity="0.3"/>
<path d="M395.5 399.4L436.1 388.3L437.8 417.0L397.6 428.8Z" stroke="#ffff8a" stroke-width="1.5" fill="none"/>
<polygon points="428.7,410.7 469.9,398.5 471.3,428.5 430.4,441.6" fill="#dccd1c" opacity="0.3"/>
<path d="M428.7 410.7L469.9 398.5L471.3 428.5L430.4 441.6Z" stroke="#ffff8a" stroke-width="1.5" fill="none"/>
<polygon points="528.3,360.5 565.1,368.8 566.0,396.7 529.4,387.2" fill="#dccd1c" opacity="0.3"/>
<path d="M528.3 360.5L565.1 368.8L566.0 396.7L529.4 387.2Z" stroke="#ffff8a" stroke-width="1.5" fill="none"/>
<polygon points="471.2,375.9 507.9,385.7 509.1,414.7 472.8,403.6" fill="#dccd1c" opacity="0.3"/>
<path d="M471.2 375.9L507.9 385.7L509.1 414.7L472.8 403.6Z" stroke="#ffff8a" stroke-width="1.5" fill="none"/>
<polygon points="586.4,340.3 611.9,333.6 612.5,358.3 587.3,365.4" fill="#dccd1c" opacity="0.3"/>
<path d="M586.4 340.3L611.9 333.6L612.5 358.3L587.3 365.4Z" stroke="#ffff8a" stroke-width="1.5" fill="none"/>
<polygon points="621.4,362.4 645.5,354.9 645.9,382.1 622.0,390.1" fill="#dccd1c" opacity="0.3"/>
<path d="M621.4 362.4L645.5 354.9L645.9 382.1L622.0 390.1Z" stroke="#ffff8a" stroke-width="1.5" fill="none"/>
<polygon points="464.4,422.8 506.0,409.4 507.0,440.9 465.7,455.4" fill="#dccd1c" opacity="0.3"/>
<path d="M464.4 422.8L506.0 409.4L507.0 440.9L465.7 455.4Z" stroke="#ffff8a" stroke-width="1.5" fill="none"/>
<polygon points="739.0,447.6 780.4,458.7 780.4,498.3 739.0,485.6" fill="#dccd1c" opacity="0.3"/>
<path d="M739.0 447.6L780.4 458.7L780.4 498.3L739.0 485.6Z" stroke="#ffff8a" stroke-width="1.5" fill="none"/>
<polygon points="634.8,480.9 675.7,460.6 675.8,499.4 635.0,521.4" fill="#dccd1c" opacity="0.3"/>
<path d="M634.8 480.9L675.7 460.6L675.8 499.4L635.0 521.4Z" stroke="#ffff8a" stroke-width="1.5" fill="none"/>
<polygon points="550.5,452.2 592.2,435.4 592.7,470.6 551.1,488.7" fill="#dccd1c" opacity="0.3"/>
<path d="M550.5 452.2L592.2 435.4L592.7 470.6L551.1 488.7Z" stroke="#ffff8a" stroke-width="1.5" fill="none"/>
<polygon points="750.5,410.8 778.0,417.0 778.0,452.0 750.6,444.9" fill="#dccd1c" opacity="0.3"/>
<path d="M750.5 410.8L778.0 417.0L778.0 452.0L750.6 444.9Z" stroke="#ffff8a" stroke-width="1.5" fill="none"/>
<polygon points="380.7,394.3 421.0,383.7 422.9,411.8 383.0,423.1" fill="#dccd1c" opacity="0.3"/>
<path d="M380.7 394.3L421.0 383.7L422.9 411.8L383.0 423.1Z" stroke="#ffff8a" stroke-width="1.5" fill="none"/>
<polygon points="334.3,416.0 382.4,402.9 384.6,432.6 336.9,446.6" fill="#dccd1c" opacity="0.3"/>
<path d="M334.3 416.0L382.4 402.9L384.6 432.6L336.9 446.6Z" stroke="#ffff8a" stroke-width="1.5" fill="none"/>
<polygon points="606.9,471.4 648.1,452.3 648.3,489.9 607.1,510.6" fill="#dccd1c" opacity="0.3"/>
<path d="M606.9 471.4L648.1 452.3L648.3 489.9L607.1 510.6Z" stroke="#ffff8a" stroke-width="1.5" fill="none"/>
<polygon points="638.4,500.7 682.5,516.7 682.6,561.7 638.6,543.5" fill="#dccd1c" opacity="0.3"/>
<path d="M638.4 500.7L682.5 516.7L682.6 561.7L638.6 543.5Z" stroke="#ffff8a" stroke-width="1.5" fill="none"/>
<polygon points="723.1,383.0 745.9,373.9 746.0,404.0 723.2,413.9" fill="#dccd1c" opacity="0.3"/>
<path d="M723.1 383.0L745.9 373.9L746.0 404.0L723.2 413.9Z" stroke="#ffff8a" stroke-width="1.5" fill="none"/>
<polygon points="804.1,380.4 826.3,370.1 826.2,400.6 804.1,411.7" fill="#dccd1c" opacity="0.3"/>
<path d="M804.1 380.4L826.3 370.1L826.2 400.6L804.1 411.7Z" stroke="#ffff8a" stroke-width="1.5" fill="none"/>
<polygon points="401.0,443.4 450.9,427.2 452.3,460.1 402.7,477.4" fill="#dccd1c" opacity="0.3"/>
<path d="M401.0 443.4L450.9 427.2L452.3 460.1L402.7 477.4Z" stroke="#ffff8a" stroke-width="1.5" fill="none"/>
<polygon points="852.8,387.4 889.4,394.1 889.4,427.7 852.8,420.0" fill="#dccd1c" opacity="0.3"/>
<path d="M852.8 387.4L889.4 394.1L889.4 427.7L852.8 420.0Z" stroke="#ffff8a" stroke-width="1.5" fill="none"/>
<polygon points="678.7,374.0 702.2,365.6 702.4,394.4 679.0,403.5" fill="#dccd1c" opacity="0.3"/>
<path d="M678.7 374.0L702.2 365.6L702.4 394.4L679.0 403.5Z" stroke="#ffff8a" stroke-width="1.5" fill="none"/>
<polygon points="734.5,367.6 758.2,358.5 758.3,387.1 734.6,396.9" fill="#dccd1c" opacity="0.3"/>
<path d="M734.5 367.6L758.2 358.5L758.3 387.1L734.6 396.9Z" stroke="#ffff8a" stroke-width="1.5" fill="none"/>
<polygon points="499.6,368.2 536.4,377.3 537.4,405.8 500.9,395.4" fill="#dccd1c" opacity="0.3"/>
<path d="M499.6 368.2L536.4 377.3L537.4 405.8L500.9 395.4Z" stroke="#ffff8a" stroke-width="1.5" fill="none"/>
<polygon points="422.6,452.2 472.9,435.0 474.1,468.9 424.0,487.4" fill="#dccd1c" opacity="0.3"/>
<path d="M422.6 452.2L472.9 435.0L474.1 468.9L424.0 487.4Z" stroke="#ffff8a" stroke-width="1.5" fill="none"/>
<polygon points="765.3,433.7 805.8,443.6 805.8,481.9 765.3,470.4" fill="#dccd1c" opacity="0.3"/>
<path d="M765.3 433.7L805.8 443.6L805.8 481.9L765.3 470.4Z" stroke="#ffff8a" stroke-width="1.5" fill="none"/>
<polygon points="859.2,390.5 879.9,379.2 879.8,411.2 859.1,423.5" fill="#dccd1c" opacity="0.3"/>
<path d="M859.2 390.5L879.9 379.2L879.8 411.2L859.1 423.5Z" stroke="#ffff8a" stroke-width="1.5" fill="none"/>
<polygon points="635.8,349.4 660.8,342.0 661.2,367.9 636.3,375.9" fill="#dccd1c" opacity="0.3"/>
<path d="M635.8 349.4L660.8 342.0L661.2 367.9L636.3 375.9Z" stroke="#ffff8a" stroke-width="1.5" fill="none"/>
<polygon points="712.0,461.8 754.3,474.1 754.4,515.2 712.1,501.1" fill="#dccd1c" opacity="0.3"/>
<path d="M712.0 461.8L754.3 474.1L754.4 515.2L712.1 501.1Z" stroke="#ffff8a" stroke-width="1.5" fill="none"/>
<polygon points="550.5,342.1 570.2,345.9 571.1,371.4 551.6,367.0" fill="#dccd1c" opacity="0.3"/>
<path d="M550.5 342.1L570.2 345.9L571.1 371.4L551.6 367.0Z" stroke="#ffff8a" stroke-width="1.5" fill="none"/>
<polygon points="723.7,423.4 751.7,430.3 751.8,466.6 723.8,458.6" fill="#dccd1c" opacity="0.3"/>
<path d="M723.7 423.4L751.7 430.3L751.8 466.6L723.8 458.6Z" stroke="#ffff8a" stroke-width="1.5" fill="none"/>
<polygon points="569.7,351.9 594.1,345.3 594.8,370.9 570.6,378.0" fill="#dccd1c" opacity="0.3"/>
<path d="M569.7 351.9L594.1 345.3L594.8 370.9L570.6 378.0Z" stroke="#ffff8a" stroke-width="1.5" fill="none"/>
<polygon points="410.3,404.4 451.1,392.9 452.7,422.1 412.2,434.5" fill="#dccd1c" opacity="0.3"/>
<path d="M410.3 404.4L451.1 392.9L452.7 422.1L412.2 434.5Z" stroke="#ffff8a" stroke-width="1.5" fill="none"/>
<polygon points="606.6,527.7 657.1,500.3 657.2,543.2 606.7,573.2" fill="#dccd1c" opacity="0.3"/>
<path d="M606.6 527.7L657.1 500.3L657.2 543.2L606.7 573.2Z" stroke="#ffff8a" stroke-width="1.5" fill="none"/>
<polygon points="696.6,436.2 725.2,443.9 725.2,481.3 696.7,472.5" fill="#dccd1c" opacity="0.3"/>
<path d="M696.6 436.2L725.2 443.9L725.2 481.3L696.7 472.5Z" stroke="#ffff8a" stroke-width="1.5" fill="none"/>
<polygon points="416.8,375.8 435.9,381.4 437.8,409.3 418.8,403.0" fill="#dccd1c" opacity="0.3"/>
<path d="M416.8 375.8L435.9 381.4L437.8 409.3L418.8 403.0Z" stroke="#ffff8a" stroke-width="1.5" fill="none"/>
<polygon points="348.6,421.9 397.1,408.1 399.1,438.5 350.9,453.1" fill="#dccd1c" opacity="0.3"/>
<path d="M348.6 421.9L397.1 408.1L399.1 438.5L350.9 453.1Z" stroke="#ffff8a" stroke-width="1.5" fill="none"/>
<polygon points="601.8,343.1 627.1,336.2 627.7,361.3 602.5,368.7" fill="#dccd1c" opacity="0.3"/>
<path d="M601.8 343.1L627.1 336.2L627.7 361.3L602.5 368.7Z" stroke="#ffff8a" stroke-width="1.5" fill="none"/>
<polygon points="542.1,501.2 593.2,477.7 593.5,517.4 542.5,543.0" fill="#dccd1c" opacity="0.3"/>
<path d="M542.1 501.2L593.2 477.7L593.5 517.4L542.5 543.0Z" stroke="#ffff8a" stroke-width="1.5" fill="none"/>
<polygon points="834.0,397.4 871.5,404.7 871.5,439.3 833.9,430.8" fill="#dccd1c" opacity="0.3"/>
<path d="M834.0 397.4L871.5 404.7L871.5 439.3L833.9 430.8Z" stroke="#ffff8a" stroke-width="1.5" fill="none"/>
<polygon points="472.9,361.7 492.4,366.5 493.8,393.4 474.5,387.9" fill="#dccd1c" opacity="0.3"/>
<path d="M472.9 361.7L492.4 366.5L493.8 393.4L474.5 387.9Z" stroke="#ffff8a" stroke-width="1.5" fill="none"/>
<polygon points="653.1,352.6 678.0,344.9 678.3,371.3 653.5,379.6" fill="#dccd1c" opacity="0.3"/>
<path d="M653.1 352.6L678.0 344.9L678.3 371.3L653.5 379.6Z" stroke="#ffff8a" stroke-width="1.5" fill="none"/>
<polygon points="486.6,430.4 528.2,416.1 529.1,448.6 487.6,463.9" fill="#dccd1c" opacity="0.3"/>
<path d="M486.6 430.4L528.2 416.1L529.1 448.6L487.6 463.9Z" stroke="#ffff8a" stroke-width="1.5" fill="none"/>
<polygon points="515.0,490.1 566.2,468.1 566.7,506.5 515.6,530.4" fill="#dccd1c" opacity="0.3"/>
<path d="M515.0 490.1L566.2 468.1L566.7 506.5L515.6 530.4Z" stroke="#ffff8a" stroke-width="1.5" fill="none"/>
<polygon points="439.8,459.3 490.4,441.2 491.4,476.0 441.1,495.4" fill="#dccd1c" opacity="0.3"/>
<path d="M439.8 459.3L490.4 441.2L491.4 476.0L441.1 495.4Z" stroke="#ffff8a" stroke-width="1.5" fill="none"/>
<polygon points="828.6,384.9 850.2,374.2 850.1,405.3 828.5,416.9" fill="#dccd1c" opacity="0.3"/>
<path d="M828.6 384.9L850.2 374.2L850.1 405.3L828.5 416.9Z" stroke="#ffff8a" stroke-width="1.5" fill="none"/>
<polygon points="661.6,370.5 685.3,362.5 685.6,390.8 662.0,399.5" fill="#dccd1c" opacity="0.3"/>
<path d="M661.6 370.5L685.3 362.5L685.6 390.8L662.0 399.5Z" stroke="#ffff8a" stroke-width="1.5" fill="none"/>
<polygon points="528.5,347.6 548.1,351.7 549.2,377.7 529.7,373.0" fill="#dccd1c" opacity="0.3"/>
<path d="M528.5 347.6L548.1 351.7L549.2 377.7L529.7 373.0Z" stroke="#ffff8a" stroke-width="1.5" fill="none"/>
<polygon points="832.2,405.2 852.7,394.0 852.7,427.3 832.2,439.5" fill="#dccd1c" opacity="0.3"/>
<path d="M832.2 405.2L852.7 394.0L852.7 427.3L832.2 439.5Z" stroke="#ffff8a" stroke-width="1.5" fill="none"/>
<polygon points="692.8,359.9 717.2,351.6 717.3,379.0 693.0,388.0" fill="#dccd1c" opacity="0.3"/>
<path d="M692.8 359.9L717.2 351.6L717.3 379.0L693.0 388.0Z" stroke="#ffff8a" stroke-width="1.5" fill="none"/>
<polygon points="465.8,470.0 516.7,450.5 517.5,486.6 466.8,507.5" fill="#dccd1c" opacity="0.3"/>
<path d="M465.8 470.0L516.7 450.5L517.5 486.6L466.8 507.5Z" stroke="#ffff8a" stroke-width="1.5" fill="none"/>
<polygon points="800.6,398.7 821.9,388.2 821.8,420.5 800.6,432.0" fill="#dccd1c" opacity="0.3"/>
<path d="M800.6 398.7L821.9 388.2L821.8 420.5L800.6 432.0Z" stroke="#ffff8a" stroke-width="1.5" fill="none"/>
<polygon points="780.0,375.9 802.7,366.1 802.7,395.9 780.0,406.6" fill="#dccd1c" opacity="0.3"/>
<path d="M780.0 375.9L802.7 366.1L802.7 395.9L780.0 406.6Z" stroke="#ffff8a" stroke-width="1.5" fill="none"/>
<polygon points="504.1,436.3 545.8,421.4 546.6,454.6 505.0,470.7" fill="#dccd1c" opacity="0.3"/>
<path d="M504.1 436.3L545.8 421.4L546.6 454.6L505.0 470.7Z" stroke="#ffff8a" stroke-width="1.5" fill="none"/>
<polygon points="669.0,449.2 698.0,457.7 698.1,496.4 669.1,486.7" fill="#dccd1c" opacity="0.3"/>
<path d="M669.0 449.2L698.0 457.7L698.1 496.4L669.1 486.7Z" stroke="#ffff8a" stroke-width="1.5" fill="none"/>
<polygon points="344.4,394.1 362.8,400.7 365.2,430.0 347.1,422.4" fill="#dccd1c" opacity="0.3"/>
<path d="M344.4 394.1L362.8 400.7L365.2 430.0L347.1 422.4Z" stroke="#ffff8a" stroke-width="1.5" fill="none"/>
<polygon points="750.6,388.6 772.9,379.0 772.9,409.9 750.6,420.3" fill="#dccd1c" opacity="0.3"/>
<path d="M750.6 388.6L772.9 379.0L772.9 409.9L750.6 420.3Z" stroke="#ffff8a" stroke-width="1.5" fill="none"/>
<polygon points="370.5,398.7 646.4,496.5 646.5,538.9 372.8,427.8" fill="#dccd1c" opacity="0.18"/>
<path d="M370.5 398.7L646.4 496.5L646.5 538.9L372.8 427.8Z" stroke="#ffffa8" stroke-width="2.2" fill="none"/>
<polygon points="589.3,340.8 850.1,388.8 850.1,421.5 590.1,366.0" fill="#dccd1c" opacity="0.18"/>
<path d="M589.3 340.8L850.1 388.8L850.1 421.5L590.1 366.0Z" stroke="#ffffa8" stroke-width="2.2" fill="none"/>
<polygon points="370.5,398.7 589.3,340.8 590.1,366.0 372.8,427.8" fill="#dccd1c" opacity="0.18"/>
<path d="M370.5 398.7L589.3 340.8L590.1 366.0L372.8 427.8Z" stroke="#ffffa8" stroke-width="2.2" fill="none"/>
<polygon points="646.4,496.5 850.1,388.8 850.1,421.5 646.5,538.9" fill="#dccd1c" opacity="0.18"/>
<path d="M646.4 496.5L850.1 388.8L850.1 421.5L646.5 538.9Z" stroke="#ffffa8" stroke-width="2.2" fill="none"/>
<polygon points="390.4,397.6 645.4,484.5 645.5,525.6 392.5,426.8" fill="#dccd1c" opacity="0.18"/>
<path d="M390.4 397.6L645.4 484.5L645.5 525.6L392.5 426.8Z" stroke="#ffffa8" stroke-width="2.2" fill="none"/>
<polygon points="588.7,344.2 831.1,389.9 831.1,422.6 589.5,369.8" fill="#dccd1c" opacity="0.18"/>
<path d="M588.7 344.2L831.1 389.9L831.1 422.6L589.5 369.8Z" stroke="#ffffa8" stroke-width="2.2" fill="none"/>
<polygon points="390.4,397.6 588.7,344.2 589.5,369.8 392.5,426.8" fill="#dccd1c" opacity="0.18"/>
<path d="M390.4 397.6L588.7 344.2L589.5 369.8L392.5 426.8Z" stroke="#ffffa8" stroke-width="2.2" fill="none"/>
<polygon points="645.4,484.5 831.1,389.9 831.1,422.6 645.5,525.6" fill="#dccd1c" opacity="0.18"/>
<path d="M645.4 484.5L831.1 389.9L831.1 422.6L645.5 525.6Z" stroke="#ffffa8" stroke-width="2.2" fill="none"/>
<polygon points="467.1,397.7 656.9,455.0 657.0,492.9 468.5,427.6" fill="#dccd1c" opacity="0.18"/>
<path d="M467.1 397.7L656.9 455.0L657.0 492.9L468.5 427.6Z" stroke="#ffffa8" stroke-width="2.2" fill="none"/>
<polygon points="601.1,358.3 783.4,395.3 783.4,428.0 601.8,385.4" fill="#dccd1c" opacity="0.18"/>
<path d="M601.1 358.3L783.4 395.3L783.4 428.0L601.8 385.4Z" stroke="#ffffa8" stroke-width="2.2" fill="none"/>
<polygon points="467.1,397.7 601.1,358.3 601.8,385.4 468.5,427.6" fill="#dccd1c" opacity="0.18"/>
<path d="M467.1 397.7L601.1 358.3L601.8 385.4L468.5 427.6Z" stroke="#ffffa8" stroke-width="2.2" fill="none"/>
<polygon points="656.9,455.0 783.4,395.3 783.4,428.0 657.0,492.9" fill="#dccd1c" opacity="0.18"/>
<path d="M656.9 455.0L783.4 395.3L783.4 428.0L657.0 492.9Z" stroke="#ffffa8" stroke-width="2.2" fill="none"/>
<path d="M352.0 392.2L354.5 420.4" stroke="#ffff8a" stroke-width="1.1"/>
<path d="M569.7 337.2L570.7 361.9" stroke="#ffff8a" stroke-width="1.1"/>
<path d="M357.9 394.2L360.4 422.8" stroke="#ffff8a" stroke-width="1.1"/>
<path d="M576.0 338.4L576.9 363.2" stroke="#ffff8a" stroke-width="1.1"/>
<path d="M363.9 396.4L366.3 425.2" stroke="#ffff8a" stroke-width="1.1"/>
<path d="M582.4 339.6L583.3 364.6" stroke="#ffff8a" stroke-width="1.1"/>
<path d="M370.1 398.6L372.4 427.7" stroke="#ffff8a" stroke-width="1.1"/>
<path d="M588.9 340.8L589.7 365.9" stroke="#ffff8a" stroke-width="1.1"/>
<path d="M376.4 400.8L378.6 430.2" stroke="#ffff8a" stroke-width="1.1"/>
<path d="M595.5 342.0L596.3 367.3" stroke="#ffff8a" stroke-width="1.1"/>
<path d="M382.8 403.1L385.0 432.8" stroke="#ffff8a" stroke-width="1.1"/>
<path d="M602.3 343.2L603.0 368.8" stroke="#ffff8a" stroke-width="1.1"/>
<path d="M389.4 405.4L391.5 435.4" stroke="#ffff8a" stroke-width="1.1"/>
<path d="M609.1 344.5L609.8 370.2" stroke="#ffff8a" stroke-width="1.1"/>
<path d="M396.2 407.8L398.2 438.1" stroke="#ffff8a" stroke-width="1.1"/>
<path d="M616.1 345.8L616.7 371.7" stroke="#ffff8a" stroke-width="1.1"/>
<path d="M403.0 410.3L405.0 440.9" stroke="#ffff8a" stroke-width="1.1"/>
<path d="M623.2 347.1L623.7 373.2" stroke="#ffff8a" stroke-width="1.1"/>
<path d="M410.1 412.8L411.9 443.7" stroke="#ffff8a" stroke-width="1.1"/>
<path d="M630.4 348.4L630.9 374.7" stroke="#ffff8a" stroke-width="1.1"/>
<path d="M417.3 415.3L419.1 446.6" stroke="#ffff8a" stroke-width="1.1"/>
<path d="M637.7 349.7L638.2 376.3" stroke="#ffff8a" stroke-width="1.1"/>
<path d="M424.7 417.9L426.4 449.6" stroke="#ffff8a" stroke-width="1.1"/>
<path d="M645.2 351.1L645.6 377.9" stroke="#ffff8a" stroke-width="1.1"/>
<path d="M432.3 420.6L433.8 452.6" stroke="#ffff8a" stroke-width="1.1"/>
<path d="M652.8 352.5L653.2 379.5" stroke="#ffff8a" stroke-width="1.1"/>
<path d="M440.0 423.4L441.5 455.7" stroke="#ffff8a" stroke-width="1.1"/>
<path d="M660.5 353.9L660.9 381.1" stroke="#ffff8a" stroke-width="1.1"/>
<path d="M448.0 426.2L449.4 458.9" stroke="#ffff8a" stroke-width="1.1"/>
<path d="M668.4 355.4L668.7 382.8" stroke="#ffff8a" stroke-width="1.1"/>
<path d="M456.1 429.1L457.4 462.2" stroke="#ffff8a" stroke-width="1.1"/>
<path d="M676.4 356.9L676.7 384.5" stroke="#ffff8a" stroke-width="1.1"/>
<path d="M464.4 432.0L465.7 465.5" stroke="#ffff8a" stroke-width="1.1"/>
<path d="M684.6 358.4L684.8 386.2" stroke="#ffff8a" stroke-width="1.1"/>
<path d="M473.0 435.0L474.2 469.0" stroke="#ffff8a" stroke-width="1.1"/>
<path d="M692.9 359.9L693.1 388.0" stroke="#ffff8a" stroke-width="1.1"/>
<path d="M481.8 438.2L482.9 472.5" stroke="#ffff8a" stroke-width="1.1"/>
<path d="M701.3 361.5L701.5 389.8" stroke="#ffff8a" stroke-width="1.1"/>
<path d="M490.8 441.3L491.8 476.1" stroke="#ffff8a" stroke-width="1.1"/>
<path d="M710.0 363.0L710.1 391.7" stroke="#ffff8a" stroke-width="1.1"/>
<path d="M500.0 444.6L500.9 479.8" stroke="#ffff8a" stroke-width="1.1"/>
<path d="M718.8 364.7L718.9 393.5" stroke="#ffff8a" stroke-width="1.1"/>
<path d="M509.5 448.0L510.4 483.6" stroke="#ffff8a" stroke-width="1.1"/>
<path d="M727.8 366.3L727.9 395.4" stroke="#ffff8a" stroke-width="1.1"/>
<path d="M519.3 451.4L520.0 487.6" stroke="#ffff8a" stroke-width="1.1"/>
<path d="M736.9 368.0L737.0 397.4" stroke="#ffff8a" stroke-width="1.1"/>
<path d="M529.3 455.0L530.0 491.6" stroke="#ffff8a" stroke-width="1.1"/>
<path d="M746.2 369.7L746.3 399.4" stroke="#ffff8a" stroke-width="1.1"/>
<path d="M539.6 458.6L540.2 495.8" stroke="#ffff8a" stroke-width="1.1"/>
<path d="M755.8 371.5L755.8 401.4" stroke="#ffff8a" stroke-width="1.1"/>
<path d="M550.2 462.4L550.7 500.0" stroke="#ffff8a" stroke-width="1.1"/>
<path d="M765.5 373.3L765.5 403.5" stroke="#ffff8a" stroke-width="1.1"/>
<path d="M561.1 466.3L561.6 504.4" stroke="#ffff8a" stroke-width="1.1"/>
<path d="M775.4 375.1L775.4 405.6" stroke="#ffff8a" stroke-width="1.1"/>
<path d="M572.3 470.2L572.7 509.0" stroke="#ffff8a" stroke-width="1.1"/>
<path d="M785.5 376.9L785.5 407.7" stroke="#ffff8a" stroke-width="1.1"/>
<path d="M583.9 474.3L584.2 513.6" stroke="#ffff8a" stroke-width="1.1"/>
<path d="M795.8 378.8L795.8 409.9" stroke="#ffff8a" stroke-width="1.1"/>
<path d="M595.8 478.6L596.1 518.4" stroke="#ffff8a" stroke-width="1.1"/>
<path d="M806.3 380.8L806.3 412.2" stroke="#ffff8a" stroke-width="1.1"/>
<path d="M608.0 482.9L608.3 523.4" stroke="#ffff8a" stroke-width="1.1"/>
<path d="M817.1 382.8L817.1 414.5" stroke="#ffff8a" stroke-width="1.1"/>
<path d="M620.7 487.4L620.9 528.5" stroke="#ffff8a" stroke-width="1.1"/>
<path d="M828.1 384.8L828.0 416.8" stroke="#ffff8a" stroke-width="1.1"/>
<path d="M633.7 492.0L633.9 533.8" stroke="#ffff8a" stroke-width="1.1"/>
<path d="M839.3 386.8L839.3 419.2" stroke="#ffff8a" stroke-width="1.1"/>
<path d="M647.2 496.8L647.3 539.2" stroke="#ffff8a" stroke-width="1.1"/>
<path d="M850.8 389.0L850.8 421.7" stroke="#ffff8a" stroke-width="1.1"/>
<path d="M661.1 501.7L661.2 544.9" stroke="#ffff8a" stroke-width="1.1"/>
<path d="M862.5 391.1L862.5 424.2" stroke="#ffff8a" stroke-width="1.1"/>
<path d="M675.5 506.8L675.5 550.7" stroke="#ffff8a" stroke-width="1.1"/>
<path d="M874.5 393.3L874.5 426.8" stroke="#ffff8a" stroke-width="1.1"/>
<polygon points="587.5,346.0 591.8,346.8 592.2,361.5 588.0,360.6" fill="#a5482c"/>
<polygon points="595.4,347.5 599.8,348.3 600.2,363.1 595.9,362.2" fill="#9a9cb3"/>
<polygon points="389.7,403.6 393.4,404.9 394.6,421.9 390.9,420.5" fill="#d8d8e4"/>
<polygon points="603.5,349.1 607.9,349.9 608.3,364.8 603.9,363.9" fill="#9a9cb3"/>
<polygon points="611.8,350.6 616.3,351.5 616.6,366.5 612.1,365.6" fill="#2b2d3a"/>
<polygon points="405.4,409.2 409.4,410.5 410.5,427.9 406.6,426.5" fill="#d8d8e4"/>
<polygon points="413.7,412.0 417.7,413.5 418.7,431.1 414.7,429.6" fill="#d8d8e4"/>
<polygon points="628.8,353.9 633.5,354.8 633.8,370.1 629.1,369.1" fill="#9a9cb3"/>
<polygon points="422.1,415.0 426.2,416.5 427.2,434.3 423.1,432.7" fill="#c9c51e"/>
<polygon points="637.5,355.5 642.3,356.4 642.6,371.9 637.8,370.9" fill="#9a9cb3"/>
<polygon points="430.7,418.1 435.0,419.5 435.9,437.6 431.7,436.0" fill="#c9c51e"/>
<polygon points="439.7,421.2 444.0,422.7 444.9,441.0 440.6,439.4" fill="#c9c51e"/>
<polygon points="448.8,424.4 453.3,426.0 454.1,444.6 449.7,442.9" fill="#a5482c"/>
<polygon points="458.2,427.7 462.9,429.3 463.6,448.2 459.0,446.4" fill="#a5482c"/>
<polygon points="633.4,371.0 638.0,371.9 638.3,388.3 633.7,387.3" fill="#c9c51e"/>
<polygon points="684.3,364.4 689.6,365.5 689.8,381.7 684.4,380.6" fill="#2b2d3a"/>
<polygon points="694.3,366.3 699.7,367.4 699.9,383.8 694.4,382.7" fill="#a5482c"/>
<polygon points="663.1,377.2 668.1,378.2 668.2,395.1 663.3,394.0" fill="#2b2d3a"/>
<polygon points="498.8,442.0 504.1,443.8 504.6,463.8 499.4,461.8" fill="#a5482c"/>
<polygon points="714.9,370.3 720.7,371.4 720.7,388.1 715.0,386.9" fill="#a5482c"/>
<polygon points="509.8,445.8 515.2,447.7 515.7,468.0 510.3,465.9" fill="#2b2d3a"/>
<polygon points="736.6,374.4 742.6,375.5 742.6,392.7 736.6,391.4" fill="#9a9cb3"/>
<polygon points="747.8,376.5 753.9,377.7 753.9,395.0 747.8,393.8" fill="#2b2d3a"/>
<polygon points="717.6,388.6 723.2,389.8 723.3,407.7 717.7,406.4" fill="#a5482c"/>
<polygon points="759.2,378.7 765.5,379.9 765.5,397.4 759.2,396.1" fill="#2b2d3a"/>
<polygon points="729.3,391.1 735.1,392.3 735.1,410.4 729.4,409.1" fill="#9a9cb3"/>
<polygon points="771.0,381.0 777.4,382.2 777.4,399.9 771.0,398.6" fill="#c9c51e"/>
<polygon points="783.0,383.2 789.7,384.5 789.6,402.4 783.0,401.1" fill="#c9c51e"/>
<polygon points="583.4,471.7 589.9,474.0 590.1,496.3 583.6,493.8" fill="#a5482c"/>
<polygon points="753.7,396.2 759.8,397.5 759.8,416.1 753.7,414.7" fill="#9a9cb3"/>
<polygon points="766.4,398.9 772.6,400.2 772.6,419.0 766.4,417.6" fill="#a5482c"/>
<polygon points="808.0,388.0 815.0,389.3 815.0,407.7 808.0,406.3" fill="#9a9cb3"/>
<polygon points="611.4,481.6 618.4,484.0 618.5,507.1 611.5,504.4" fill="#d8d8e4"/>
<polygon points="779.4,401.6 785.8,403.0 785.8,422.0 779.4,420.5" fill="#c9c51e"/>
<polygon points="821.0,390.5 828.2,391.9 828.1,410.4 821.0,409.0" fill="#2b2d3a"/>
<polygon points="834.3,393.0 841.7,394.4 841.7,413.2 834.3,411.7" fill="#9a9cb3"/>
<polygon points="848.0,395.6 855.6,397.1 855.5,416.1 848.0,414.6" fill="#c9c51e"/>
<polygon points="673.9,503.5 682.0,506.4 682.1,531.3 673.9,528.2" fill="#d8d8e4"/>
<polygon points="876.5,401.1 884.4,402.6 884.4,422.1 876.5,420.5" fill="#a5482c"/>
<polygon points="691.1,509.6 699.5,512.6 699.5,537.9 691.1,534.7" fill="#d8d8e4"/>
<polygon points="394.2,398.9 404.1,396.2 405.3,412.7 395.5,415.5" fill="#2b2d3a"/>
<polygon points="413.7,393.6 423.2,391.1 424.3,407.4 414.8,410.1" fill="#2b2d3a"/>
<polygon points="475.6,401.8 485.5,398.8 486.3,416.0 476.4,419.0" fill="#a5482c"/>
<polygon points="493.7,396.4 503.2,393.6 503.9,410.5 494.5,413.4" fill="#a5482c"/>
<polygon points="467.3,379.2 475.7,377.0 476.6,392.8 468.3,395.1" fill="#c9c51e"/>
<polygon points="483.8,374.8 491.8,372.6 492.7,388.3 484.6,390.5" fill="#2b2d3a"/>
<polygon points="514.8,366.5 522.2,364.5 523.0,379.8 515.5,381.8" fill="#c9c51e"/>
<polygon points="573.4,372.6 581.1,370.3 581.5,386.2 573.9,388.6" fill="#2b2d3a"/>
<polygon points="557.1,355.1 563.8,353.3 564.3,368.2 557.7,370.0" fill="#9a9cb3"/>
<polygon points="570.2,351.6 576.6,349.8 577.1,364.6 570.7,366.4" fill="#c9c51e"/>
<polygon points="582.9,348.2 589.1,346.5 589.5,361.1 583.3,362.8" fill="#2b2d3a"/>
<polygon points="508,404 540,396 556,401 556,420 524,428 508,422" fill="#9a9cb3"/>
<polygon points="524,428 556,420 590,431 560,440" fill="#a5482c"/>
<rect x="510" y="399.6" width="3.4" height="34" fill="#ffff00" stroke="#ffff8a" stroke-width=".7"/>
<rect x="517" y="398.4" width="3.4" height="34" fill="#ffff00" stroke="#ffff8a" stroke-width=".7"/>
<rect x="524" y="397.1" width="3.4" height="34" fill="#ffff00" stroke="#ffff8a" stroke-width=".7"/>
<rect x="531" y="395.9" width="3.4" height="34" fill="#ffff00" stroke="#ffff8a" stroke-width=".7"/>
<rect x="538" y="394.6" width="3.4" height="34" fill="#ffff00" stroke="#ffff8a" stroke-width=".7"/>
<rect x="545" y="393.3" width="3.4" height="34" fill="#ffff00" stroke="#ffff8a" stroke-width=".7"/>
<rect x="552" y="392.1" width="3.4" height="34" fill="#ffff00" stroke="#ffff8a" stroke-width=".7"/>
<rect x="559" y="390.8" width="3.4" height="34" fill="#ffff00" stroke="#ffff8a" stroke-width=".7"/>
<path d="M506 405 556 397M506 424 560 414" stroke="#ffff8a" stroke-width="2.2"/>
<polygon points="555.0,401.0 566.0,405.0 571.0,400.0 602.0,391.5 640.0,400.0 693.0,413.0 709.0,417.0 703.0,426.0 679.0,432.5 628.0,456.0 618.0,440.0 590.0,431.0 555.0,419.0" fill="#8d432c"/>
<polygon points="693,413 709,417 703,426 694,424" fill="#b86545"/>
<path d="M590 404 680 428" stroke="#5a2a1c" stroke-width=".8"/>
<path d="M621.5 396V438" stroke="#d6a21a" stroke-width="1.5"/>
<path d="M627 397V441" stroke="#d6a21a" stroke-width="1.5"/>
<path d="M642 401V447" stroke="#d6a21a" stroke-width="1.5"/>
<path d="M648 402V445" stroke="#d6a21a" stroke-width="1.5"/>
<path d="M589 401V418" stroke="#e8c820" stroke-width="1.4"/>
<path d="M593 402V418" stroke="#e8c820" stroke-width="1.4"/>
<rect x="602.0" y="391.0" width="3.4" height="2.6" fill="#ffff00"/>
<rect x="609.0" y="392.7" width="3.4" height="2.6" fill="#ffff00"/>
<rect x="616.0" y="394.3" width="3.4" height="2.6" fill="#ffff00"/>
<rect x="623.0" y="396.0" width="3.4" height="2.6" fill="#ffff00"/>
<rect x="630.0" y="397.6" width="3.4" height="2.6" fill="#ffff00"/>
<rect x="637.0" y="399.3" width="3.4" height="2.6" fill="#ffff00"/>
<rect x="644.0" y="400.9" width="3.4" height="2.6" fill="#ffff00"/>
<rect x="651.0" y="402.6" width="3.4" height="2.6" fill="#ffff00"/>
<rect x="658.0" y="404.2" width="3.4" height="2.6" fill="#ffff00"/>
<rect x="665.0" y="405.9" width="3.4" height="2.6" fill="#ffff00"/>
<rect x="672.0" y="407.5" width="3.4" height="2.6" fill="#ffff00"/>
<rect x="679.0" y="409.2" width="3.4" height="2.6" fill="#ffff00"/>
<rect x="686.0" y="410.8" width="3.4" height="2.6" fill="#ffff00"/>
<rect x="556" y="409" width="3.2" height="11" fill="#ffff00" stroke="#ffff8a" stroke-width=".6"/>
<rect x="563" y="412" width="3.2" height="11" fill="#ffff00" stroke="#ffff8a" stroke-width=".6"/>
<rect x="572" y="415" width="3.2" height="11" fill="#ffff00" stroke="#ffff8a" stroke-width=".6"/>
<rect x="581" y="418" width="3.2" height="11" fill="#ffff00" stroke="#ffff8a" stroke-width=".6"/>
<rect x="600" y="424" width="3.2" height="11" fill="#ffff00" stroke="#ffff8a" stroke-width=".6"/>
<rect x="609" y="427" width="3.2" height="11" fill="#ffff00" stroke="#ffff8a" stroke-width=".6"/>
<rect x="683" y="422" width="3.2" height="11" fill="#ffff00" stroke="#ffff8a" stroke-width=".6"/>
<rect x="690" y="419" width="3.2" height="11" fill="#ffff00" stroke="#ffff8a" stroke-width=".6"/>
<rect x="697" y="417" width="3.2" height="11" fill="#ffff00" stroke="#ffff8a" stroke-width=".6"/>
<polygon points="703,408 724,404 760,412 760,480 722,471 703,462" fill="#a9502f"/>
<polygon points="722,440 760,428 760,480 722,471" fill="#b85c3c"/>
<polygon points="709,454.6 713.5,453.1 713.5,470.4 709,471.9" fill="#231f24"/>
<polygon points="719,450.4 723.5,448.9 723.5,468.4 719,469.9" fill="#231f24"/>
<polygon points="731,445.4 735.5,443.9 735.5,466.0 731,467.5" fill="#231f24"/>
<polygon points="743,440.4 747.5,438.9 747.5,463.6 743,465.1" fill="#231f24"/>
<polygon points="690,445 703,439 703,452 690,458" fill="#1d1d22"/>
<polygon points="690,417 760,438 760,452 690,431" fill="#ffff00"/>
<path d="M690 417 760 438M690 431 760 452" stroke="#ffff8a" stroke-width="1.600"/>
<rect x="694" y="404.2" width="3.6" height="30" fill="#ffff00" stroke="#ffff8a" stroke-width=".7"/>
<rect x="703" y="406.9" width="3.6" height="30" fill="#ffff00" stroke="#ffff8a" stroke-width=".7"/>
<rect x="712" y="409.6" width="3.6" height="30" fill="#ffff00" stroke="#ffff8a" stroke-width=".7"/>
<rect x="721" y="412.3" width="3.6" height="30" fill="#ffff00" stroke="#ffff8a" stroke-width=".7"/>
<rect x="730" y="415.0" width="3.6" height="30" fill="#ffff00" stroke="#ffff8a" stroke-width=".7"/>
<rect x="739" y="417.7" width="3.6" height="30" fill="#ffff00" stroke="#ffff8a" stroke-width=".7"/>
<rect x="748" y="420.4" width="3.6" height="30" fill="#ffff00" stroke="#ffff8a" stroke-width=".7"/>
<rect x="757" y="423.1" width="3.6" height="30" fill="#ffff00" stroke="#ffff8a" stroke-width=".7"/>
<rect x="713" y="427.9" width="4.5" height="7" fill="#2b2d3a"/>
<rect x="735" y="434.5" width="4.5" height="7" fill="#2b2d3a"/>
<path d="M587 408V394" stroke="#1c1cf0" stroke-width="2"/><path d="M587 408l-9.500 4" stroke="#f01010" stroke-width="1.800"/><path d="M587 408l11 3" stroke="#10d010" stroke-width="1.800"/>
<polygon points="610.4,529.2 640.5,541.6 640.5,589.0 610.7,575.0" fill="#e8be22"/>
<polygon points="640.5,541.6 669.6,524.3 669.6,570.1 640.5,589.0" fill="#e8be22"/>
<path d="M305.0 404.0L308.0 433.0" stroke="#ffff8a" stroke-width="3.0"/>
<path d="M305.0 404.0L308.0 433.0" stroke="#ffff00" stroke-width="1.8"/>
<path d="M315.9 408.5L318.8 438.1" stroke="#ffff8a" stroke-width="3.0"/>
<path d="M315.9 408.5L318.8 438.1" stroke="#ffff00" stroke-width="1.8"/>
<path d="M326.6 412.9L329.4 443.1" stroke="#ffff8a" stroke-width="3.1"/>
<path d="M326.6 412.9L329.4 443.1" stroke="#ffff00" stroke-width="1.9"/>
<path d="M337.1 417.2L339.8 447.9" stroke="#ffff8a" stroke-width="3.1"/>
<path d="M337.1 417.2L339.8 447.9" stroke="#ffff00" stroke-width="1.9"/>
<path d="M347.3 421.4L349.9 452.7" stroke="#ffff8a" stroke-width="3.2"/>
<path d="M347.3 421.4L349.9 452.7" stroke="#ffff00" stroke-width="2.0"/>
<path d="M357.3 425.5L359.9 457.3" stroke="#ffff8a" stroke-width="3.2"/>
<path d="M357.3 425.5L359.9 457.3" stroke="#ffff00" stroke-width="2.0"/>
<path d="M367.1 429.5L369.6 461.9" stroke="#ffff8a" stroke-width="3.2"/>
<path d="M367.1 429.5L369.6 461.9" stroke="#ffff00" stroke-width="2.0"/>
<path d="M376.7 433.4L379.1 466.4" stroke="#ffff8a" stroke-width="3.3"/>
<path d="M376.7 433.4L379.1 466.4" stroke="#ffff00" stroke-width="2.1"/>
<path d="M386.1 437.3L388.4 470.7" stroke="#ffff8a" stroke-width="3.3"/>
<path d="M386.1 437.3L388.4 470.7" stroke="#ffff00" stroke-width="2.1"/>
<path d="M395.4 441.1L397.5 475.0" stroke="#ffff8a" stroke-width="3.4"/>
<path d="M395.4 441.1L397.5 475.0" stroke="#ffff00" stroke-width="2.2"/>
<path d="M404.4 444.8L406.5 479.2" stroke="#ffff8a" stroke-width="3.4"/>
<path d="M404.4 444.8L406.5 479.2" stroke="#ffff00" stroke-width="2.2"/>
<path d="M413.2 448.4L415.3 483.3" stroke="#ffff8a" stroke-width="3.4"/>
<path d="M413.2 448.4L415.3 483.3" stroke="#ffff00" stroke-width="2.2"/>
<path d="M421.9 451.9L423.9 487.4" stroke="#ffff8a" stroke-width="3.5"/>
<path d="M421.9 451.9L423.9 487.4" stroke="#ffff00" stroke-width="2.3"/>
<path d="M430.4 455.4L432.3 491.3" stroke="#ffff8a" stroke-width="3.5"/>
<path d="M430.4 455.4L432.3 491.3" stroke="#ffff00" stroke-width="2.3"/>
<path d="M438.7 458.9L440.5 495.2" stroke="#ffff8a" stroke-width="3.5"/>
<path d="M438.7 458.9L440.5 495.2" stroke="#ffff00" stroke-width="2.3"/>
<path d="M446.9 462.2L448.7 499.0" stroke="#ffff8a" stroke-width="3.6"/>
<path d="M446.9 462.2L448.7 499.0" stroke="#ffff00" stroke-width="2.4"/>
<path d="M454.9 465.5L456.6 502.7" stroke="#ffff8a" stroke-width="3.6"/>
<path d="M454.9 465.5L456.6 502.7" stroke="#ffff00" stroke-width="2.4"/>
<path d="M462.8 468.7L464.4 506.4" stroke="#ffff8a" stroke-width="3.7"/>
<path d="M462.8 468.7L464.4 506.4" stroke="#ffff00" stroke-width="2.5"/>
<path d="M470.5 471.9L472.1 510.0" stroke="#ffff8a" stroke-width="3.7"/>
<path d="M470.5 471.9L472.1 510.0" stroke="#ffff00" stroke-width="2.5"/>
<path d="M478.1 475.0L479.6 513.5" stroke="#ffff8a" stroke-width="3.7"/>
<path d="M478.1 475.0L479.6 513.5" stroke="#ffff00" stroke-width="2.5"/>
<path d="M485.6 478.1L487.0 517.0" stroke="#ffff8a" stroke-width="3.8"/>
<path d="M485.6 478.1L487.0 517.0" stroke="#ffff00" stroke-width="2.6"/>
<path d="M492.9 481.1L494.2 520.4" stroke="#ffff8a" stroke-width="3.8"/>
<path d="M492.9 481.1L494.2 520.4" stroke="#ffff00" stroke-width="2.6"/>
<path d="M500.1 484.0L501.3 523.7" stroke="#ffff8a" stroke-width="3.9"/>
<path d="M500.1 484.0L501.3 523.7" stroke="#ffff00" stroke-width="2.7"/>
<path d="M507.1 486.9L508.3 527.0" stroke="#ffff8a" stroke-width="3.9"/>
<path d="M507.1 486.9L508.3 527.0" stroke="#ffff00" stroke-width="2.7"/>
<path d="M514.0 489.7L515.2 530.2" stroke="#ffff8a" stroke-width="3.9"/>
<path d="M514.0 489.7L515.2 530.2" stroke="#ffff00" stroke-width="2.7"/>
<path d="M520.8 492.5L521.9 533.4" stroke="#ffff8a" stroke-width="4.0"/>
<path d="M520.8 492.5L521.9 533.4" stroke="#ffff00" stroke-width="2.8"/>
<path d="M527.5 495.3L528.5 536.5" stroke="#ffff8a" stroke-width="4.0"/>
<path d="M527.5 495.3L528.5 536.5" stroke="#ffff00" stroke-width="2.8"/>
<path d="M534.1 498.0L535.0 539.5" stroke="#ffff8a" stroke-width="4.1"/>
<path d="M534.1 498.0L535.0 539.5" stroke="#ffff00" stroke-width="2.9"/>
<path d="M540.6 500.6L541.5 542.5" stroke="#ffff8a" stroke-width="4.1"/>
<path d="M540.6 500.6L541.5 542.5" stroke="#ffff00" stroke-width="2.9"/>
<path d="M546.9 503.2L547.7 545.5" stroke="#ffff8a" stroke-width="4.1"/>
<path d="M546.9 503.2L547.7 545.5" stroke="#ffff00" stroke-width="2.9"/>
<path d="M553.2 505.8L553.9 548.4" stroke="#ffff8a" stroke-width="4.2"/>
<path d="M553.2 505.8L553.9 548.4" stroke="#ffff00" stroke-width="3.0"/>
<path d="M559.3 508.3L560.0 551.2" stroke="#ffff8a" stroke-width="4.2"/>
<path d="M559.3 508.3L560.0 551.2" stroke="#ffff00" stroke-width="3.0"/>
<path d="M565.3 510.8L566.0 554.0" stroke="#ffff8a" stroke-width="4.3"/>
<path d="M565.3 510.8L566.0 554.0" stroke="#ffff00" stroke-width="3.1"/>
<path d="M571.3 513.2L571.9 556.8" stroke="#ffff8a" stroke-width="4.3"/>
<path d="M571.3 513.2L571.9 556.8" stroke="#ffff00" stroke-width="3.1"/>
<path d="M577.1 515.6L577.7 559.5" stroke="#ffff8a" stroke-width="4.3"/>
<path d="M577.1 515.6L577.7 559.5" stroke="#ffff00" stroke-width="3.1"/>
<path d="M582.9 518.0L583.4 562.2" stroke="#ffff8a" stroke-width="4.4"/>
<path d="M582.9 518.0L583.4 562.2" stroke="#ffff00" stroke-width="3.2"/>
<path d="M588.5 520.3L589.0 564.8" stroke="#ffff8a" stroke-width="4.4"/>
<path d="M588.5 520.3L589.0 564.8" stroke="#ffff00" stroke-width="3.2"/>
<path d="M594.1 522.6L594.5 567.4" stroke="#ffff8a" stroke-width="4.4"/>
<path d="M594.1 522.6L594.5 567.4" stroke="#ffff00" stroke-width="3.2"/>
<path d="M599.6 524.8L599.9 570.0" stroke="#ffff8a" stroke-width="4.5"/>
<path d="M599.6 524.8L599.9 570.0" stroke="#ffff00" stroke-width="3.3"/>
<path d="M605.0 527.0L605.3 572.5" stroke="#ffff8a" stroke-width="4.5"/>
<path d="M605.0 527.0L605.3 572.5" stroke="#ffff00" stroke-width="3.3"/>
<path d="M610.3 529.2L610.5 574.9" stroke="#ffff8a" stroke-width="4.6"/>
<path d="M610.3 529.2L610.5 574.9" stroke="#ffff00" stroke-width="3.4"/>
<path d="M630.7 537.6L630.8 584.5" stroke="#ffff8a" stroke-width="4.7"/>
<path d="M630.7 537.6L630.8 584.5" stroke="#ffff00" stroke-width="3.5"/>
<path d="M640.5 541.6L640.5 589.0" stroke="#ffff8a" stroke-width="4.8"/>
<path d="M640.5 541.6L640.5 589.0" stroke="#ffff00" stroke-width="3.6"/>
<polygon points="312.3,413.7 320.9,417.4 322.5,434.1 313.9,430.2" fill="#23252f"/>
<polygon points="314.9,416.5 319.2,418.4 320.5,431.5 316.2,429.5" fill="#e4e6ee"/>
<path d="M316.9 415.7L318.5 432.3" stroke="#23252f" stroke-width="1.300"/>
<polygon points="333.6,422.8 341.8,426.3 343.3,443.6 335.1,439.9" fill="#23252f"/>
<polygon points="336.1,425.6 340.2,427.4 341.4,441.0 337.3,439.1" fill="#e4e6ee"/>
<path d="M338.0 424.6L339.5 441.9" stroke="#23252f" stroke-width="1.300"/>
<polygon points="354.0,431.4 361.9,434.8 363.3,452.7 355.4,449.1" fill="#dccd1c"/>
<polygon points="373.5,439.7 381.1,442.9 382.4,461.5 374.8,458.0" fill="#23252f"/>
<polygon points="375.8,442.6 379.6,444.2 380.6,458.7 376.8,457.0" fill="#e4e6ee"/>
<path d="M377.5 441.4L378.8 459.9" stroke="#23252f" stroke-width="1.300"/>
<polygon points="392.2,447.7 399.5,450.7 400.7,469.9 393.5,466.6" fill="#23252f"/>
<polygon points="394.4,450.6 398.0,452.1 399.0,467.1 395.4,465.5" fill="#e4e6ee"/>
<path d="M396.1 449.3L397.3 468.3" stroke="#23252f" stroke-width="1.300"/>
<polygon points="410.2,455.3 417.2,458.2 418.3,477.9 411.4,474.7" fill="#23252f"/>
<polygon points="412.3,458.2 415.8,459.7 416.7,475.1 413.2,473.5" fill="#e4e6ee"/>
<path d="M413.9 456.9L415.0 476.4" stroke="#23252f" stroke-width="1.300"/>
<polygon points="427.5,462.6 434.2,465.5 435.2,485.7 428.5,482.6" fill="#dccd1c"/>
<polygon points="444.1,469.7 450.6,472.4 451.5,493.1 445.1,490.2" fill="#23252f"/>
<polygon points="446.0,472.6 449.2,474.0 450.0,490.2 446.8,488.8" fill="#e4e6ee"/>
<path d="M447.5 471.1L448.5 491.7" stroke="#23252f" stroke-width="1.300"/>
<polygon points="460.1,476.4 466.3,479.1 467.2,500.3 461.0,497.4" fill="#23252f"/>
<polygon points="461.9,479.4 465.0,480.8 465.7,497.4 462.6,496.0" fill="#e4e6ee"/>
<path d="M463.4 477.8L464.3 498.9" stroke="#23252f" stroke-width="1.300"/>
<polygon points="475.5,483.0 481.5,485.5 482.3,507.2 476.3,504.4" fill="#23252f"/>
<polygon points="477.2,486.0 480.2,487.3 480.9,504.2 477.9,502.9" fill="#e4e6ee"/>
<path d="M478.6 484.3L479.5 505.9" stroke="#23252f" stroke-width="1.300"/>
<polygon points="490.3,489.3 496.1,491.7 496.8,513.8 491.0,511.2" fill="#dccd1c"/>
<polygon points="504.6,495.3 510.2,497.7 510.8,520.2 505.3,517.7" fill="#23252f"/>
<polygon points="506.2,498.4 509.0,499.6 509.5,517.3 506.8,516.0" fill="#e4e6ee"/>
<path d="M507.6 496.6L508.2 519.0" stroke="#23252f" stroke-width="1.300"/>
<polygon points="518.4,501.2 523.8,503.5 524.4,526.4 519.0,524.0" fill="#23252f"/>
<polygon points="520.0,504.3 522.7,505.4 523.1,523.4 520.4,522.2" fill="#e4e6ee"/>
<path d="M521.2 502.4L521.8 525.3" stroke="#23252f" stroke-width="1.300"/>
<polygon points="531.7,506.8 536.9,509.0 537.4,532.4 532.3,530.0" fill="#23252f"/>
<polygon points="533.2,509.9 535.8,511.1 536.2,529.4 533.7,528.2" fill="#e4e6ee"/>
<path d="M534.5 508.0L535.0 531.3" stroke="#23252f" stroke-width="1.300"/>
<polygon points="544.6,512.3 549.6,514.4 550.1,538.2 545.1,535.9" fill="#dccd1c"/>
<polygon points="557.0,517.6 561.9,519.6 562.3,543.8 557.4,541.5" fill="#23252f"/>
<polygon points="558.4,520.7 560.9,521.8 561.2,540.7 558.8,539.6" fill="#e4e6ee"/>
<path d="M559.6 518.7L560.0 542.7" stroke="#23252f" stroke-width="1.300"/>
<polygon points="569.1,522.7 573.8,524.7 574.1,549.2 569.4,547.0" fill="#23252f"/>
<polygon points="570.4,525.8 572.8,526.8 573.0,546.1 570.7,545.0" fill="#e4e6ee"/>
<path d="M571.6 523.7L571.9 548.1" stroke="#23252f" stroke-width="1.300"/>
<polygon points="580.7,527.6 585.3,529.5 585.5,554.4 581.0,552.3" fill="#23252f"/>
<polygon points="582.0,530.8 584.3,531.8 584.5,551.3 582.2,550.2" fill="#e4e6ee"/>
<path d="M583.1 528.6L583.4 553.4" stroke="#23252f" stroke-width="1.300"/>
<polygon points="592.0,532.4 596.4,534.3 596.6,559.4 592.2,557.4" fill="#dccd1c"/>
<polygon points="602.9,537.0 607.2,538.8 607.3,564.4 603.1,562.4" fill="#23252f"/>
<polygon points="604.1,540.3 606.3,541.2 606.4,561.2 604.3,560.2" fill="#e4e6ee"/>
<path d="M605.2 538.0L605.3 563.4" stroke="#23252f" stroke-width="1.300"/>
<polygon points="613.5,541.5 617.6,543.3 617.7,569.1 613.6,567.2" fill="#23252f"/>
<polygon points="614.7,544.8 616.7,545.7 616.8,565.9 614.8,565.0" fill="#e4e6ee"/>
<path d="M615.7 542.4L615.8 568.2" stroke="#23252f" stroke-width="1.300"/>
<polygon points="623.7,545.9 627.8,547.6 627.8,573.7 623.8,571.9" fill="#23252f"/>
<polygon points="624.9,549.1 626.9,550.0 626.9,570.5 624.9,569.6" fill="#e4e6ee"/>
<path d="M625.9 546.8L626.0 572.9" stroke="#23252f" stroke-width="1.300"/>
<path d="M305.0 404.0L640.5 541.6" stroke="#ffff8a" stroke-width="2.4"/>
<path d="M305.4 407.8L640.5 547.8" stroke="#ffff8a" stroke-width="1.6"/>
<path d="M307.7 430.1L640.5 584.3" stroke="#ffff8a" stroke-width="1.6"/>
<path d="M308.0 433.0L640.5 589.0" stroke="#ffff8a" stroke-width="2.6"/>
<polygon points="664.6,536.6 666.7,535.2 666.7,565.6 664.6,567.0" fill="#2a2426" opacity="0.0"/>
<polygon points="668.7,534.1 670.9,532.7 670.9,562.9 668.7,564.3" fill="#b5573a" opacity="0.85"/>
<polygon points="672.9,531.5 675.1,530.2 675.1,560.2 672.9,561.6" fill="#b5573a" opacity="0.85"/>
<polygon points="677.2,528.9 679.5,527.6 679.5,557.4 677.2,558.9" fill="#2a2426" opacity="0.85"/>
<polygon points="681.5,526.3 683.9,524.9 683.9,554.6 681.5,556.1" fill="#b5573a" opacity="0.85"/>
<polygon points="686.0,523.6 688.4,522.2 688.4,551.7 686.0,553.2" fill="#b5573a" opacity="0.85"/>
<polygon points="690.5,520.9 693.0,519.4 693.0,548.8 690.5,550.3" fill="#2a2426" opacity="0.85"/>
<polygon points="695.2,518.1 697.7,516.5 697.7,545.7 695.2,547.4" fill="#b5573a" opacity="0.85"/>
<polygon points="699.9,515.2 702.5,513.7 702.5,542.7 699.9,544.3" fill="#b5573a" opacity="0.85"/>
<polygon points="704.8,512.3 707.4,510.7 707.4,539.5 704.8,541.2" fill="#2a2426" opacity="0.85"/>
<polygon points="709.7,509.3 712.4,507.7 712.4,536.3 709.7,538.0" fill="#b5573a" opacity="0.85"/>
<polygon points="714.8,506.2 717.5,504.6 717.5,533.1 714.8,534.8" fill="#b5573a" opacity="0.85"/>
<polygon points="719.9,503.1 722.7,501.4 722.7,529.7 719.9,531.5" fill="#2a2426" opacity="0.85"/>
<polygon points="725.2,499.9 728.0,498.2 728.0,526.3 725.2,528.1" fill="#b5573a" opacity="0.85"/>
<polygon points="730.6,496.7 733.5,494.9 733.5,522.8 730.6,524.7" fill="#b5573a" opacity="0.85"/>
<polygon points="736.1,493.3 739.1,491.6 739.1,519.2 736.1,521.1" fill="#2a2426" opacity="0.85"/>
<polygon points="692,490 716,478 739,469 741,498 702,514" fill="#e3bb24"/>
<polygon points="692,490 716,478 717,497 694,508" fill="#d9c51e"/>
<path d="M692 490 716 478 739 469M716 478l1 19M694 508l23-11 24-9" fill="none" stroke="#ffff8a" stroke-width="1.500"/>
<path d="M640.5 541.6L640.5 589.0" stroke="#ffff00" stroke-width="4.2"/>
<path d="M640.5 541.6L640.5 589.0" stroke="#ffff8a" stroke-width="1.4"/>
<path d="M644.2 539.4L644.2 586.6" stroke="#ffff00" stroke-width="4.2"/>
<path d="M644.2 539.4L644.2 586.6" stroke="#ffff8a" stroke-width="1.3"/>
<path d="M667.6 525.5L667.6 571.4" stroke="#ffff00" stroke-width="4.0"/>
<path d="M667.6 525.5L667.6 571.4" stroke="#ffff8a" stroke-width="1.3"/>
<path d="M671.8 523.0L671.8 568.7" stroke="#ffff00" stroke-width="4.0"/>
<path d="M671.8 523.0L671.8 568.7" stroke="#ffff8a" stroke-width="1.3"/>
<path d="M676.1 520.5L676.1 565.9" stroke="#ffff00" stroke-width="4.0"/>
<path d="M676.1 520.5L676.1 565.9" stroke="#ffff8a" stroke-width="1.3"/>
<path d="M680.4 517.9L680.4 563.1" stroke="#ffff00" stroke-width="4.0"/>
<path d="M680.4 517.9L680.4 563.1" stroke="#ffff8a" stroke-width="1.2"/>
<path d="M684.9 515.3L684.9 560.2" stroke="#ffff00" stroke-width="4.0"/>
<path d="M684.9 515.3L684.9 560.2" stroke="#ffff8a" stroke-width="1.2"/>
<path d="M689.4 512.6L689.4 557.3" stroke="#ffff00" stroke-width="3.9"/>
<path d="M689.4 512.6L689.4 557.3" stroke="#ffff8a" stroke-width="1.2"/>
<path d="M694.0 509.9L694.0 554.3" stroke="#ffff00" stroke-width="3.9"/>
<path d="M694.0 509.9L694.0 554.3" stroke="#ffff8a" stroke-width="1.2"/>
<path d="M698.7 507.1L698.7 551.3" stroke="#ffff00" stroke-width="3.9"/>
<path d="M698.7 507.1L698.7 551.3" stroke="#ffff8a" stroke-width="1.2"/>
<path d="M703.5 504.2L703.5 548.1" stroke="#ffff00" stroke-width="3.9"/>
<path d="M703.5 504.2L703.5 548.1" stroke="#ffff8a" stroke-width="1.2"/>
<path d="M708.5 501.3L708.5 545.0" stroke="#ffff00" stroke-width="3.8"/>
<path d="M708.5 501.3L708.5 545.0" stroke="#ffff8a" stroke-width="1.2"/>
<path d="M713.5 498.3L713.5 541.7" stroke="#ffff00" stroke-width="3.8"/>
<path d="M713.5 498.3L713.5 541.7" stroke="#ffff8a" stroke-width="1.2"/>
<path d="M718.6 495.3L718.6 538.4" stroke="#ffff00" stroke-width="3.8"/>
<path d="M718.6 495.3L718.6 538.4" stroke="#ffff8a" stroke-width="1.2"/>
<path d="M723.9 492.2L723.9 535.0" stroke="#ffff00" stroke-width="3.8"/>
<path d="M723.9 492.2L723.9 535.0" stroke="#ffff8a" stroke-width="1.2"/>
<path d="M729.2 489.0L729.2 531.5" stroke="#ffff00" stroke-width="3.7"/>
<path d="M729.2 489.0L729.2 531.5" stroke="#ffff8a" stroke-width="1.1"/>
<path d="M734.7 485.7L734.7 527.9" stroke="#ffff00" stroke-width="3.7"/>
<path d="M734.7 485.7L734.7 527.9" stroke="#ffff8a" stroke-width="1.1"/>
<path d="M740.3 482.4L740.3 524.3" stroke="#ffff00" stroke-width="3.7"/>
<path d="M740.3 482.4L740.3 524.3" stroke="#ffff8a" stroke-width="1.1"/>
<path d="M746.1 479.0L746.1 520.6" stroke="#ffff00" stroke-width="3.7"/>
<path d="M746.1 479.0L746.1 520.6" stroke="#ffff8a" stroke-width="1.1"/>
<path d="M751.9 475.5L751.9 516.8" stroke="#ffff00" stroke-width="3.7"/>
<path d="M751.9 475.5L751.9 516.8" stroke="#ffff8a" stroke-width="1.1"/>
<path d="M757.9 472.0L757.9 512.9" stroke="#ffff00" stroke-width="3.6"/>
<path d="M757.9 472.0L757.9 512.9" stroke="#ffff8a" stroke-width="1.1"/>
<path d="M764.1 468.3L764.1 508.9" stroke="#ffff00" stroke-width="3.6"/>
<path d="M764.1 468.3L764.1 508.9" stroke="#ffff8a" stroke-width="1.1"/>
<path d="M640.5 541.6L906.7 383.8" stroke="#ffff8a" stroke-width="2"/>
<path d="M640.5 548.2L906.7 388.4" stroke="#ffff8a" stroke-width="2"/>
<path d="M640.5 584.3L906.7 413.2" stroke="#ffff8a" stroke-width="2"/>
<path d="M640.5 589.0L906.7 416.5" stroke="#ffff8a" stroke-width="2"/>
<polygon points="307.8,406.8 313.7,405.3 313.7,416.8 307.8,418.3" fill="#2b2d3a"/>
<polygon points="319.0,404.0 324.9,402.5 324.9,413.8 319.0,415.3" fill="#8f92aa"/>
<polygon points="330.1,401.2 336.0,399.7 336.0,410.9 330.1,412.4" fill="#8f92aa"/>
<polygon points="352.4,395.5 358.4,394.0 358.4,405.1 352.4,406.5" fill="#8f92aa"/>
<polygon points="363.6,392.7 369.5,391.2 369.5,402.1 363.6,403.6" fill="#8f92aa"/>
<polygon points="374.8,389.9 380.7,388.4 380.7,399.2 374.8,400.7" fill="#2b2d3a"/>
<polygon points="397.1,384.3 403.0,382.8 403.0,393.3 397.1,394.8" fill="#8f92aa"/>
<polygon points="408.2,381.5 414.2,380.0 414.2,390.4 408.2,391.9" fill="#2b2d3a"/>
<polygon points="419.4,378.6 425.3,377.2 425.3,387.5 419.4,389.0" fill="#8f92aa"/>
<polygon points="441.7,373.0 447.6,371.5 447.6,381.6 441.7,383.1" fill="#2b2d3a"/>
<polygon points="452.9,370.2 458.8,368.7 458.8,378.7 452.9,380.2" fill="#8f92aa"/>
<polygon points="464.1,367.4 470.0,365.9 470.0,375.7 464.1,377.2" fill="#8f92aa"/>
<polygon points="486.4,361.8 492.3,360.3 492.3,369.9 486.4,371.4" fill="#8f92aa"/>
<polygon points="497.5,358.9 503.5,357.4 503.5,367.0 497.5,368.4" fill="#8f92aa"/>
<polygon points="508.7,356.1 514.6,354.6 514.6,364.0 508.7,365.5" fill="#2b2d3a"/>
<polygon points="531.0,350.5 536.9,349.0 536.9,358.2 531.0,359.7" fill="#8f92aa"/>
<polygon points="542.2,347.7 548.1,346.2 548.1,355.2 542.2,356.7" fill="#2b2d3a"/>
<polygon points="553.3,344.9 559.3,343.4 559.3,352.3 553.3,353.8" fill="#8f92aa"/>
<polygon points="575.7,339.2 581.6,337.7 581.6,346.4 575.7,347.9" fill="#2b2d3a"/>
<polygon points="586.8,336.4 592.7,334.9 592.7,343.5 586.8,345.0" fill="#8f92aa"/>
<polygon points="597.8,335.2 603.3,336.2 603.3,347.2 597.8,346.2" fill="#2b2d3a"/>
<polygon points="618.6,338.8 624.1,339.7 624.1,350.7 618.6,349.8" fill="#8f92aa"/>
<polygon points="628.9,340.5 634.4,341.5 634.4,352.5 628.9,351.5" fill="#2b2d3a"/>
<polygon points="639.3,342.3 644.8,343.2 644.8,354.2 639.3,353.3" fill="#8f92aa"/>
<polygon points="660.1,345.8 665.6,346.8 665.6,357.8 660.1,356.8" fill="#2b2d3a"/>
<polygon points="670.5,347.6 676.0,348.5 676.0,359.5 670.5,358.6" fill="#8f92aa"/>
<polygon points="680.9,349.4 686.4,350.3 686.4,361.3 680.9,360.4" fill="#8f92aa"/>
<polygon points="701.6,352.9 707.1,353.8 707.1,364.8 701.6,363.9" fill="#8f92aa"/>
<polygon points="712.0,354.7 717.5,355.6 717.5,366.6 712.0,365.7" fill="#8f92aa"/>
<polygon points="722.4,356.4 727.9,357.4 727.9,368.4 722.4,367.4" fill="#2b2d3a"/>
<polygon points="743.2,360.0 748.7,360.9 748.7,371.9 743.2,371.0" fill="#8f92aa"/>
<polygon points="753.5,361.7 759.0,362.7 759.0,373.7 753.5,372.7" fill="#2b2d3a"/>
<polygon points="763.9,363.5 769.4,364.4 769.4,375.4 763.9,374.5" fill="#8f92aa"/>
<path d="M305 404L595.2 330.8L906.7 383.8" fill="none" stroke="#ffff8a" stroke-width="2.200"/>
</g>
<polygon points="1061,86.500 1098.800,81.200 1139.700,85.900 1103.700,93.200" fill="#fff" stroke="#444" stroke-width="1"/>
<polygon points="1061,86.500 1103.700,93.200 1103.500,157.300 1065.600,136" fill="#fff" stroke="#444" stroke-width="1"/>
<polygon points="1103.700,93.200 1139.700,85.900 1134.900,134.700 1103.500,157.300" fill="#fff" stroke="#444" stroke-width="1"/>
<text transform="matrix(.80 .36 0 1.1 1069.300 119.500)" font-size="13" fill="#707070" font-family='"Liberation Sans",sans-serif' textLength="33" lengthAdjust="spacingAndGlyphs">Справа</text>
<text transform="matrix(.62 -.44 0 1.15 1112.500 131)" font-size="14" fill="#707070" font-family='"Liberation Sans",sans-serif' textLength="31" lengthAdjust="spacingAndGlyphs">Сзади</text>
</svg>
<svg class="abs" style="left:0;top:0" width="1844" height="819" viewBox="0 0 1844 819">
<path d="M741 343L724.4 327.0A24 24 0 1 1 757.6 327.0Z" fill="#fe0000" stroke="#fff" stroke-width="1.600" stroke-linejoin="round"/>
<path d="M404.2 379.5L388.5 366.0A24 24 0 1 1 419.9 366.0Z" fill="#fe0000" stroke="#fff" stroke-width="1.600" stroke-linejoin="round"/>
<path d="M661.8 490.5L647.0 478.9A24 24 0 1 1 676.6 478.9Z" fill="#fe0000" stroke="#fff" stroke-width="1.600" stroke-linejoin="round"/>
<path d="M665.2 548.3L648.9 533.2A24 24 0 1 1 681.5 533.2Z" fill="#fe0000" stroke="#fff" stroke-width="1.600" stroke-linejoin="round"/>
</svg>
<span class="t" style="left:394.0px;top:340.7px;font-size:14.5px;color:#fff;font-weight:700;font-family:'Liberation Serif', serif;transform-origin:0 50%;transform:scaleX(1.044);">P-4</span>
<span class="t" style="left:731.0px;top:302.7px;font-size:14.5px;color:#fff;font-weight:700;font-family:'Liberation Serif', serif;transform-origin:0 50%;transform:scaleX(1.044);">P-4</span>
<span class="t" style="left:651.5px;top:453.4px;font-size:14.5px;color:#fff;font-weight:700;font-family:'Liberation Serif', serif;transform-origin:0 50%;transform:scaleX(1.044);">P-3</span>
<span class="t" style="left:651.5px;top:508.9px;font-size:14.5px;color:#fff;font-weight:700;font-family:'Liberation Serif', serif;transform-origin:0 50%;transform:scaleX(1.042);">P-15</span>
<div id="top">
<div class="abs" style="left:6px;top:6px;width:48px;height:15px;background:#fff"></div>
<div class="abs" style="left:10.5px;top:9.2px;width:1.6px;height:8.8px;background:#111"></div>
<span class="t" style="left:13.4px;top:7.5px;font-size:12.4px;color:#111;font-weight:700;letter-spacing:1.245px;">BiMiT</span>
<div class="abs" style="left:39.1px;top:9.0px;width:2.0px;height:1.8px;background:#e00"></div>
<svg class="abs" style="left:352px;top:1px" width="24" height="24" viewBox="0 0 24 24" fill="none" stroke="#e6e6e6" stroke-width="1.7">
<rect x="2.8" y="7" width="18.4" height="13" rx="1.2"/><path d="M8.5 7V4.2h7V7M2.8 13.2h7M14.2 13.2h7"/><rect x="9.8" y="11.6" width="4.4" height="3.2" fill="#e6e6e6" stroke="none"/></svg>
<svg class="abs" style="left:385px;top:2px" width="26" height="22" viewBox="0 0 26 22" fill="#e6e6e6">
<circle cx="13" cy="4.2" r="2.3" fill="none" stroke="#e6e6e6" stroke-width="1.5"/><circle cx="4.8" cy="8.2" r="1.9"/><circle cx="21.2" cy="8.2" r="1.9"/>
<path d="M0.6 19c0-4 1.6-6.6 4.2-6.6 1 0 1.8.3 2.4.9-1.2 1.5-1.8 3.4-1.8 5.7zM25.4 19c0-4-1.6-6.600-4.2-6.600-1 0-1.800.300-2.400.900 1.200 1.500 1.800 3.400 1.800 5.700z"/>
<path d="M7.600 19c0-5 2.200-8.200 5.400-8.200s5.400 3.200 5.400 8.200" fill="none" stroke="#e6e6e6" stroke-width="1.6"/></svg>
<svg class="abs" style="left:421px;top:1px" width="24" height="24" viewBox="0 0 24 24" fill="none" stroke="#e6e6e6" stroke-width="1.7">
<path d="M11.500 20.800C6.500 18.800 3.200 14.800 3.200 10.300V5.600L10.500 2.800l7.300 2.800v5"/><circle cx="16.600" cy="16.200" r="4.300" stroke-width="1.500"/><circle cx="16.600" cy="14.900" r="1.100" fill="#e6e6e6" stroke="none"/><path d="M14.300 18.300c.6-1 1.400-1.400 2.300-1.400s1.700.4 2.300 1.400z" fill="#e6e6e6" stroke="none"/></svg>
<div class="abs" style="left:448px;top:0;width:2px;height:29px;background:#707070"></div>
<span class="t" style="left:458.0px;top:6.6px;font-size:14px;color:#d8d8d8;font-weight:400;letter-spacing:-0.195px;">Базовое пространство</span>
<svg class="abs" style="left:632px;top:11px" width="11" height="6"><path d="M0 0h11L5.5 5.800z" fill="#bdbdbd"/></svg>
<span class="t" style="left:1019.0px;top:4.4px;font-size:18px;color:#e4e4e4;font-weight:400;letter-spacing:0.654px;">Школа</span>
<svg class="abs" style="left:1091px;top:1px" width="24" height="24" viewBox="0 0 24 24" fill="#e6e6e6"><path d="M19.430 12.980c.040-.320.070-.640.070-.980 0-.340-.030-.660-.070-.980l2.110-1.650c.190-.150.240-.420.120-.640l-2-3.460c-.090-.160-.260-.250-.440-.250-.060 0-.120.010-.170.030l-2.490 1c-.520-.400-1.080-.730-1.690-.980l-.380-2.650C14.460 2.180 14.250 2 14 2h-4c-.250 0-.460.180-.490.420l-.380 2.650c-.610.250-1.170.590-1.690.980l-2.490-1c-.060-.020-.120-.030-.180-.030-.170 0-.340.090-.430.250l-2 3.460c-.130.220-.070.490.120.640l2.110 1.650c-.040.320-.070.650-.070.980 0 .330.030.660.070.980l-2.110 1.650c-.190.150-.240.420-.120.640l2 3.460c.090.160.260.250.440.250.060 0 .12-.010.170-.030l2.490-1c.520.400 1.080.730 1.690.980l.380 2.650c.030.240.240.420.490.420h4c.250 0 .460-.180.490-.420l.380-2.650c.610-.250 1.170-.590 1.690-.980l2.490 1c.060.020.120.030.180.030.170 0 .340-.090.430-.250l2-3.460c.120-.220.070-.490-.120-.640l-2.110-1.650zm-1.980-1.710c.040.310.050.520.050.730 0 .210-.020.430-.050.730l-.140 1.130.890.700 1.080.840-.700 1.210-1.270-.510-1.040-.420-.900.680c-.430.320-.840.560-1.250.730l-1.060.430-.160 1.130-.200 1.350h-1.400l-.190-1.350-.160-1.130-1.060-.430c-.430-.180-.830-.410-1.230-.710l-.910-.700-1.060.430-1.270.510-.700-1.210 1.080-.840.890-.700-.140-1.130c-.030-.310-.050-.540-.050-.740s.020-.430.050-.730l.140-1.130-.890-.700-1.080-.840.700-1.210 1.270.510 1.040.420.900-.680c.430-.320.840-.560 1.250-.730l1.060-.430.160-1.130.200-1.350h1.390l.190 1.350.160 1.130 1.060.430c.430.180.830.410 1.230.710l.910.700 1.060-.430 1.270-.510.700 1.210-1.070.850-.890.700.140 1.130zM12 8c-2.210 0-4 1.790-4 4s1.790 4 4 4 4-1.790 4-4-1.790-4-4-4zm0 6c-1.100 0-2-.900-2-2s.900-2 2-2 2 .900 2 2-.900 2-2 2z"/></svg>
<svg class="abs" style="left:1129px;top:5px" width="21" height="17" viewBox="0 0 21 17" fill="#e6e6e6"><path d="M11.800 0.800 19.800 7.300 11.800 13.800V10c-5-.3-8.500 1.200-10.800 5.700 .6-6.200 4.200-10.300 10.800-11.100z"/></svg>
<div class="abs" style="left:1649px;top:0;width:2px;height:29px;background:#707070"></div>
<svg class="abs" style="left:1671px;top:1px" width="24" height="24" viewBox="0 0 24 24" fill="none" stroke="#e6e6e6" stroke-width="2"><circle cx="9.500" cy="9.500" r="5.600"/><path d="M13.700 13.700 20.500 20.500"/></svg>
<div class="abs" style="left:1735px;top:0;width:32px;height:29px;background:#8e8e8e"></div>
<svg class="abs" style="left:1739px;top:1px" width="24" height="24" viewBox="0 0 24 24" fill="#e6e6e6"><circle cx="4.200" cy="5.500" r="1.400"/><circle cx="4.200" cy="11.800" r="1.400"/><circle cx="4.200" cy="18.100" r="1.400"/><rect x="7.600" y="4.500" width="14" height="2"/><rect x="7.600" y="10.800" width="14" height="2"/><rect x="7.600" y="17.100" width="14" height="2"/></svg>
<svg class="abs" style="left:1773px;top:1px" width="24" height="24" viewBox="0 0 24 24" fill="none" stroke="#e6e6e6" stroke-width="1.700"><path d="M18.300 16.500A8.300 8.300 0 1 1 19.800 9.500"/><path d="M16.800 10.300h6l-3 3.600z" fill="#e6e6e6" stroke="none"/><path d="M8.200 15.200v-.8l1-1V10.500c0-1.900 1-3.400 2.800-3.400s2.800 1.500 2.800 3.400v2.900l1 1v.8z" fill="#e6e6e6" stroke="none"/><circle cx="12" cy="16.600" r="1" fill="#e6e6e6" stroke="none"/></svg>
<svg class="abs" style="left:1807px;top:1px" width="24" height="24" viewBox="0 0 24 24"><rect x="3" y="3" width="18" height="18" rx="1.600" fill="#e6e6e6"/><circle cx="12" cy="9.300" r="3" fill="#545454"/><path d="M6 17.600c0-2.600 3.600-3.600 6-3.600s6 1 6 3.600v.9H6z" fill="#545454"/></svg>
</div>
<div class="lb" style="top:37px"><svg width="48" height="48" viewBox="0 0 48 48"><rect x="8" y="9" width="13" height="6" rx="3" fill="#e6e6e6"/><path d="M20 12h3.600v24.500M23.600 16.300h6M23.600 26.300h6M23.600 36.500h6" fill="none" stroke="#e6e6e6" stroke-linecap="round" stroke-linejoin="round" stroke-width="1.700"/>
<rect x="31" y="14" width="10" height="4.600" rx="2.300" fill="#e6e6e6"/><rect x="31" y="24" width="10" height="4.600" rx="2.300" fill="#e6e6e6"/><rect x="31" y="34.200" width="10" height="4.600" rx="2.300" fill="#e6e6e6"/></svg></div>
<div class="lb" style="top:87px"><svg width="48" height="48" viewBox="0 0 48 48"><circle cx="19" cy="16.500" r="3.200" fill="#e6e6e6"/><circle cx="19" cy="31.200" r="3.200" fill="#e6e6e6"/><circle cx="28.800" cy="27" r="3.200" fill="#e6e6e6"/><path d="M19 16.500V31M19 17c.3 5.500 3.500 8.500 9.500 10" fill="none" stroke="#e6e6e6" stroke-linecap="round" stroke-linejoin="round" stroke-width="2.200"/></svg></div>
<div class="lb" style="top:137px"><svg width="48" height="48" viewBox="0 0 48 48"><path d="M10 15c11 0 10 17.200 28 17.200M10 31.600c11 0 10-18 28-18" fill="none" stroke="#e6e6e6" stroke-linecap="round" stroke-linejoin="round" stroke-width="2"/><path d="M32 8.600l7.600 5-7.600 5M32 27.200l7.600 5-7.600 5" fill="none" stroke="#e6e6e6" stroke-linecap="round" stroke-linejoin="round" stroke-width="2"/></svg></div>
<div class="lb" style="top:187px"><svg width="48" height="48" viewBox="0 0 48 48"><path d="M31 13.500H16l9 9.800-9 9.800h15" fill="none" stroke="#e6e6e6" stroke-linecap="round" stroke-linejoin="round" stroke-width="3"/></svg></div>
<div class="lb" style="top:237px"><svg width="48" height="48" viewBox="0 0 48 48"><path d="M25.500 14.500H11.500l8.500 9.500-8.500 9.500h14" fill="none" stroke="#e6e6e6" stroke-linecap="round" stroke-linejoin="round" stroke-width="3"/><path d="M28.500 24.500h8M32.500 20.500v8" fill="none" stroke="#e6e6e6" stroke-linecap="round" stroke-linejoin="round" stroke-width="1.700"/></svg></div>
<div class="lb" style="top:287px"><svg width="48" height="48" viewBox="0 0 48 48"><path d="M12 10.500c8-1.600 16-1.600 24 0-1.600 9-1.600 18 0 27h-6l-1.500-1.500H12c1.600-8.500 1.600-17 0-25.500z" fill="none" stroke="#e6e6e6" stroke-linecap="round" stroke-linejoin="round" stroke-width="1.600"/><text x="23.800" y="27" font-size="10" fill="#e6e6e6" text-anchor="middle" font-family='"Liberation Sans",sans-serif'>2D</text></svg></div>
<div class="lb" style="top:337px"><svg width="48" height="48" viewBox="0 0 48 48"><rect x="19.500" y="9.500" width="8" height="9.500" rx="1" fill="none" stroke="#e6e6e6" stroke-linecap="round" stroke-linejoin="round" stroke-width="1.600"/><path d="M23.500 19v5M11.500 30v-6h24.500v6M23.500 24v6" fill="none" stroke="#e6e6e6" stroke-linecap="round" stroke-linejoin="round" stroke-width="1.600"/><rect x="8.500" y="30" width="6.500" height="9" rx="1" fill="none" stroke="#e6e6e6" stroke-linecap="round" stroke-linejoin="round" stroke-width="1.600"/><rect x="20.200" y="30" width="6.500" height="9" rx="1" fill="none" stroke="#e6e6e6" stroke-linecap="round" stroke-linejoin="round" stroke-width="1.600"/><rect x="32.500" y="30" width="6.500" height="9" rx="1" fill="none" stroke="#e6e6e6" stroke-linecap="round" stroke-linejoin="round" stroke-width="1.600"/></svg></div>
<div class="lb" style="top:387px"><svg width="48" height="48" viewBox="0 0 48 48"><path d="M13 19l6.500-6 6 3.500 9.500-8.500M13 28.500c5-5 7-5 10-2.500s7 2 12-2.500M13.500 35.500h21" fill="none" stroke="#e6e6e6" stroke-linecap="round" stroke-linejoin="round" stroke-width="1.800"/></svg></div>
<div class="lb" style="top:437px"><svg width="48" height="48" viewBox="0 0 48 48"><path d="M12 17.500h6.800c-1.600-2.600-.6-6 2.700-6s4.300 3.400 2.700 6h7.300v6.300c2.600-1.600 6-.6 6 2.700s-3.400 4.300-6 2.700v7.300h-6.300c1.600-2.600.6-5.500-2.700-5.500s-4.300 2.900-2.700 5.500H12v-6.800c2.600 1.600 5.500.6 5.500-2.700S14.600 22.900 12 24.500z" fill="none" stroke="#e6e6e6" stroke-linecap="round" stroke-linejoin="round" stroke-width="1.700"/></svg></div>
<div class="lb" style="top:487px"><svg width="48" height="48" viewBox="0 0 48 48"><circle cx="23.500" cy="16" r="5.500" fill="none" stroke="#e6e6e6" stroke-linecap="round" stroke-linejoin="round" stroke-width="1.800"/><path d="M11.500 35.500c0-7 5-10.500 12-10.500 2.500 0 4.500.5 6 1.300" fill="none" stroke="#e6e6e6" stroke-linecap="round" stroke-linejoin="round" stroke-width="1.800"/><path d="M28.500 34l3.700 4.500 7.300-9.500" fill="none" stroke="#e6e6e6" stroke-linecap="round" stroke-linejoin="round" stroke-width="2.200"/></svg></div>
<div class="lb" style="top:537px"><svg width="48" height="48" viewBox="0 0 48 48"><path d="M9.500 14.500h8.500l3 3h13.500v4M9.500 14.500l3.500 21h24l3-14H16l-2.500 8" fill="none" stroke="#e6e6e6" stroke-linecap="round" stroke-linejoin="round" stroke-width="1.700"/><path d="M35 29.200H21.500M26 24.500l-5 4.700 5 4.700" fill="none" stroke="#e6e6e6" stroke-linecap="round" stroke-linejoin="round" stroke-width="1.700"/></svg></div>
<div class="lb" style="top:587px"><svg width="48" height="48" viewBox="0 0 48 48"><circle cx="17.500" cy="16" r="5.500" fill="none" stroke="#e6e6e6" stroke-linecap="round" stroke-linejoin="round" stroke-width="1.800"/><path d="M7.500 33.500c0-6 4-9.500 10-9.500 3 0 5.500.8 7 2.300M7.500 33.500h17" fill="none" stroke="#e6e6e6" stroke-linecap="round" stroke-linejoin="round" stroke-width="1.800"/><path d="M33 40c-3.300-4-5-6.500-5-8.800a5 5 0 0 1 10 0c0 2.300-1.700 4.800-5 8.800z" fill="none" stroke="#e6e6e6" stroke-linecap="round" stroke-linejoin="round" stroke-width="1.700"/><circle cx="33" cy="31" r="1.500" fill="#e6e6e6"/></svg></div>
<div class="lb" style="top:637px"><svg width="48" height="48" viewBox="0 0 48 48"><circle cx="23.700" cy="22" r="13" fill="none" stroke="#e6e6e6" stroke-linecap="round" stroke-linejoin="round" stroke-width="1.800"/><circle cx="23.700" cy="22" r="10" fill="none" stroke="#e6e6e6" stroke-linecap="round" stroke-linejoin="round" stroke-width=".8" stroke-dasharray="1 2.200"/><path d="M22.600 27.500l3.800-12.500-1.600 12.800z" fill="#e6e6e6" stroke="#e6e6e6" stroke-width="1.200"/><path d="M23.700 35v4M9.500 39.500h29" fill="none" stroke="#e6e6e6" stroke-linecap="round" stroke-linejoin="round" stroke-width="1.800"/></svg></div>
<div class="abs" style="left:62px;top:37px;width:32px;height:32px;background:#545454"><svg width="32" height="32" viewBox="0 0 32 32" fill="none" stroke="#e6e6e6" stroke-width="1.200"><path d="M7 12.500V7h5.500M19.500 7H25v5.500M25 19.500V25h-5.500M12.500 25H7v-5.500"/><path d="M16 10.800l4.500 2.600v5.200L16 21.200l-4.500-2.600v-5.200z" fill="#e6e6e6" stroke="none"/></svg></div>
<div class="abs" style="left:17px;top:782px;width:24px;height:24px;border-radius:50%;background:#545454"></div>
<span class="t" style="left:25.5px;top:787.3px;font-size:13px;color:#fff;font-weight:700;letter-spacing:0.000px;">?</span>
<svg class="abs" style="left:62px;top:654px" width="100" height="100" viewBox="62 654 100 100">
<circle cx="112" cy="703.600" r="46.300" fill="#636363"/>
<path d="M112 704V684" stroke="#0000ff" stroke-width="2"/><path d="M112 675.500l-2.800 9.500h5.600z" fill="#0000ff"/>
<path d="M112 704L98 709.500" stroke="#ff0000" stroke-width="2"/><path d="M90.500 712l9-6.500 1.500 5z" fill="#ff0000"/>
<path d="M112 704l16 5" stroke="#00ee00" stroke-width="2"/><path d="M136 711l-9.500 1 1.500-5.500z" fill="#00ee00"/>
<circle cx="112" cy="704" r="4" fill="#a8a8a8"/><circle cx="111" cy="703" r="1.500" fill="#ddd"/>
</svg>
<span class="t" style="left:112.7px;top:661.9px;font-size:9px;color:#0000ff;font-weight:700;letter-spacing:0.000px;">Z</span>
<span class="t" style="left:84.3px;top:707.0px;font-size:9.5px;color:#ff0000;font-weight:400;letter-spacing:0.000px;">X</span>
<span class="t" style="left:143.0px;top:704.5px;font-size:9.5px;color:#00cc00;font-weight:400;letter-spacing:0.000px;">Y</span>
<div class="abs" style="left:746px;top:297px;width:350px;height:350px;background:#545454;border-radius:4px;box-shadow:0 1px 5px rgba(0,0,0,.4)"></div>
<span class="t" style="left:758.0px;top:315.5px;font-size:16px;color:#e0e0e0;font-weight:400;letter-spacing:0.032px;">Отчет</span>
<div class="abs" style="left:810.700px;top:320.700px;width:50.300px;height:5.800px;border:1.200px solid #f2f2f2"></div>
<div class="abs" style="left:810.700px;top:320.700px;width:4.300px;height:5.800px;background:#f2f2f2"></div>
<span class="t" style="left:865.3px;top:317.5px;font-size:12px;color:#e0e0e0;font-weight:400;letter-spacing:-0.363px;">6.25%</span>
<svg class="abs" style="left:1070px;top:315px" width="16" height="16" viewBox="0 0 16 16"><path d="M1.800 1.800l12.400 12.400M14.200 1.800 1.800 14.200" stroke="#fff" stroke-width="2" fill="none"/></svg>
<div class="abs" style="left:750px;top:348.600px;width:342px;height:290px;background:#fff;border-radius:3px"></div>
<span class="t" style="left:758.0px;top:356.1px;font-size:14px;color:#222;font-weight:400;letter-spacing:-0.037px;">Новый класс - 01-1-1</span>
<span class="t" style="left:765.8px;top:383.1px;font-size:14px;color:#8a8a8a;font-weight:400;letter-spacing:-0.235px;">Объем: 352 шт</span>
<div class="abs" style="left:758px;top:402.300px;width:326px;height:24.400px;background:#f5f5f5"></div>
<span class="t" style="left:766.0px;top:403.1px;font-size:14px;color:#333;font-weight:400;transform-origin:0 50%;transform:scaleX(1.059);">Дата</span>
<span class="t" style="left:869.8px;top:403.1px;font-size:14px;color:#333;font-weight:400;letter-spacing:-0.197px;">Объем,шт</span>
<span class="t" style="left:941.0px;top:403.1px;font-size:14px;color:#333;font-weight:400;letter-spacing:0.000px;">%</span>
<svg class="abs" style="left:1020.200px;top:404.200px" width="19.600" height="19.600" viewBox="0 0 24 24" fill="#c4c4c4"><path d="M17 3H5a2 2 0 0 0-2 2v14a2 2 0 0 0 2 2h14c1.100 0 2-.900 2-2V7l-4-4zm2 16H5V5h11.170L19 7.830V19zm-7-7c-1.660 0-3 1.340-3 3s1.340 3 3 3 3-1.340 3-3-1.340-3-3-3zM6 6h9v4H6z"/></svg>
<svg class="abs" style="left:1047.25px;top:403.25px" width="21.5" height="21.5" viewBox="0 0 24 24" fill="#c4c4c4"><path d="M6 19c0 1.100.900 2 2 2h8c1.100 0 2-.900 2-2V7H6v12zM8 9h8v10H8V9zm7.500-5-1-1h-5l-1 1H5v2h14V4z"/></svg>
<span class="t" style="left:765.8px;top:439.8px;font-size:14px;color:#222;font-weight:400;letter-spacing:0.109px;">24.10.2025</span>
<span class="t" style="left:869.9px;top:439.8px;font-size:14px;color:#222;font-weight:400;letter-spacing:0.075px;">15.0000</span>
<span class="t" style="left:940.8px;top:439.8px;font-size:14px;color:#222;font-weight:400;letter-spacing:-0.304px;">4.2614%</span>
<svg class="abs" style="left:1019.25px;top:436.25px" width="21.5" height="21.5" viewBox="0 0 24 24" fill="#c8c8c8"><path d="M3 17.250V21h3.750L17.810 9.940l-3.750-3.750L3 17.250zM20.710 7.040a1 1 0 0 0 0-1.410l-2.340-2.340a1 1 0 0 0-1.410 0l-1.830 1.830 3.750 3.750 1.830-1.830z"/></svg>
<svg class="abs" style="left:1047.25px;top:436.25px" width="21.5" height="21.5" viewBox="0 0 24 24" fill="#c4c4c4"><path d="M6 19c0 1.100.900 2 2 2h8c1.100 0 2-.900 2-2V7H6v12zM8 9h8v10H8V9zm7.500-5-1-1h-5l-1 1H5v2h14V4z"/></svg>
<div class="abs" style="left:758px;top:463.0px;width:326px;height:1px;background:#dcdcdc"></div>
<span class="t" style="left:765.8px;top:476.6px;font-size:14px;color:#222;font-weight:400;letter-spacing:0.109px;">30.10.2025</span>
<span class="t" style="left:869.9px;top:476.6px;font-size:14px;color:#222;font-weight:400;letter-spacing:0.206px;">5.0000</span>
<span class="t" style="left:940.8px;top:476.6px;font-size:14px;color:#222;font-weight:400;letter-spacing:-0.304px;">1.4205%</span>
<svg class="abs" style="left:1019.25px;top:473.05px" width="21.5" height="21.5" viewBox="0 0 24 24" fill="#c8c8c8"><path d="M3 17.250V21h3.750L17.810 9.940l-3.750-3.750L3 17.250zM20.710 7.040a1 1 0 0 0 0-1.410l-2.340-2.340a1 1 0 0 0-1.410 0l-1.830 1.830 3.750 3.750 1.830-1.830z"/></svg>
<svg class="abs" style="left:1047.25px;top:473.05px" width="21.5" height="21.5" viewBox="0 0 24 24" fill="#c4c4c4"><path d="M6 19c0 1.100.900 2 2 2h8c1.100 0 2-.900 2-2V7H6v12zM8 9h8v10H8V9zm7.500-5-1-1h-5l-1 1H5v2h14V4z"/></svg>
<div class="abs" style="left:758px;top:499.8px;width:326px;height:1px;background:#dcdcdc"></div>
<span class="t" style="left:765.8px;top:513.6px;font-size:14px;color:#222;font-weight:400;letter-spacing:0.340px;">11.11.2025</span>
<span class="t" style="left:869.9px;top:513.6px;font-size:14px;color:#222;font-weight:400;letter-spacing:0.206px;">2.0000</span>
<span class="t" style="left:940.8px;top:513.6px;font-size:14px;color:#222;font-weight:400;letter-spacing:-0.304px;">0.5682%</span>
<svg class="abs" style="left:1019.25px;top:510.04999999999995px" width="21.5" height="21.5" viewBox="0 0 24 24" fill="#c8c8c8"><path d="M3 17.250V21h3.750L17.810 9.940l-3.750-3.750L3 17.250zM20.710 7.040a1 1 0 0 0 0-1.410l-2.340-2.340a1 1 0 0 0-1.410 0l-1.830 1.830 3.750 3.750 1.830-1.830z"/></svg>
<svg class="abs" style="left:1047.25px;top:510.04999999999995px" width="21.5" height="21.5" viewBox="0 0 24 24" fill="#c4c4c4"><path d="M6 19c0 1.100.900 2 2 2h8c1.100 0 2-.900 2-2V7H6v12zM8 9h8v10H8V9zm7.500-5-1-1h-5l-1 1H5v2h14V4z"/></svg>
<div class="abs" style="left:758px;top:536.8px;width:326px;height:1px;background:#dcdcdc"></div>
<svg class="abs" style="left:765px;top:545.500px" width="18" height="18" viewBox="0 0 18 18" fill="none" stroke="#c0c0c0" stroke-width="1.400"><rect x=".8" y=".8" width="16.400" height="16.400" rx="1"/><path d="M9 4.500v9M4.500 9h9"/></svg>
<div class="panel" style="left:1176px;top:37px;width:308px;height:775px"></div>
<div class="abs" style="left:1179px;top:468px;width:2px;height:27px;background:#3c8fb0"></div>
<svg class="abs" style="left:1196px;top:52px" width="18" height="18" viewBox="0 0 18 18" fill="none" stroke="#fff" stroke-width="2"><path d="M16.600 9H2.600M9 2.200 2.200 9 9 15.800"/></svg>
<svg class="abs" style="left:1229.5px;top:55px" width="17" height="14" viewBox="0 0 17 14" fill="#e6e6e6"><rect x="0" y="0" width="12.600" height="1.900"/><rect x="0" y="3.800" width="12.600" height="1.900"/><rect x="0" y="7.600" width="8.800" height="1.900"/><path d="M11.200 7.800 16.200 10.800 11.200 13.800z"/></svg>
<span class="t" style="left:1251.5px;top:54.8px;font-size:12px;color:#e0e0e0;font-weight:400;letter-spacing:-0.445px;">PROJECT1-10</span>
<span class="t" style="left:1427.0px;top:54.8px;font-size:12px;color:#ea5455;font-weight:700;letter-spacing:-0.278px;">Новая</span>
<svg class="abs" style="left:1469.5px;top:54px" width="6" height="16" viewBox="0 0 6 16"><path d="M3 0 5.600 3.600H.4z" fill="#7a7a7a"/><path d="M3 5.800 5.600 9.400H.4z" fill="#7a7a7a"/><path d="M3 11.600 5.800 15.600H.2z" fill="#fff"/></svg>
<div class="abs" style="left:1191px;top:84px;width:280px;height:600px;background:#efefef;border-radius:5px 0 0 0"></div>
<div class="abs" style="left:1471px;top:84px;width:8px;height:600px;background:#6c6c6c"></div>
<div class="abs" style="left:1471px;top:84px;width:8px;height:243px;background:#3b93b3"></div>
<div class="abs" style="left:1199px;top:91.500px;width:264px;height:102.500px;background:#eaeaea;border-radius:5px 5px 0 0"></div>
<span class="t" style="left:1207.0px;top:104.5px;font-size:10px;color:#222;font-weight:400;letter-spacing:0.031px;">с 20.10.2025 по 12.12.2027</span>
<div class="abs" style="left:1340px;top:107px;width:84px;height:5.500px;border:1px solid #c6c6c6;background:#ededed"></div>
<div class="abs" style="left:1340px;top:107px;width:5.800px;height:5.500px;background:#c6c6c6"></div>
<span class="t" style="left:1428.4px;top:104.5px;font-size:10px;color:#222;font-weight:400;letter-spacing:-0.215px;">6.25%</span>
<span class="t" style="left:1207.0px;top:130.5px;font-size:16.5px;color:#222;font-weight:400;letter-spacing:0.064px;">новая смета</span>
<span class="t" style="left:1207.0px;top:166.5px;font-size:12px;color:#222;font-weight:400;letter-spacing:0.123px;">Описание</span>
<div class="abs" style="left:1199px;top:194px;width:264px;height:333px;background:#fff"></div>
<span class="t" style="left:1207.0px;top:206.6px;font-size:12px;color:#222;font-weight:400;letter-spacing:0.211px;">Смета</span>
<span class="t" style="left:1356.5px;top:200.4px;font-size:12px;color:#757575;font-weight:400;letter-spacing:0.400px;">Объем:</span>
<span class="t" style="left:1356.5px;top:212.6px;font-size:12px;color:#757575;font-weight:400;letter-spacing:0.500px;">352 (1 шт)</span>
<svg class="abs" style="left:1441px;top:207px" width="16" height="12" viewBox="0 0 16 12"><path d="M2.200 9.200 8 3.400l5.800 5.800" fill="none" stroke="#555" stroke-width="1.900"/></svg>
<span class="t" style="left:1207.0px;top:239.6px;font-size:14px;color:#222;font-weight:400;letter-spacing:-0.011px;">Новый класс - 01-1-1</span>
<span class="t" style="left:1207.0px;top:255.0px;font-size:12px;color:#757575;font-weight:400;letter-spacing:-0.076px;">Объем - 352 (1 шт)</span>
<span class="t" style="left:1207.0px;top:267.2px;font-size:12px;color:#757575;font-weight:400;letter-spacing:0.060px;">Затраченный объем - 0 (1 шт)</span>
<span class="t" style="left:1207.0px;top:279.4px;font-size:12px;color:#757575;font-weight:400;letter-spacing:0.089px;">Прогнозируемый объем - 352 (1 шт)</span>
<span class="t" style="left:1212.0px;top:303.4px;font-size:12.5px;color:#3c8fb0;font-weight:400;letter-spacing:1.045px;">Открыть расценку</span>
<svg class="abs" style="left:1227px;top:332px" width="12" height="16" viewBox="0 0 12 16"><path d="M9 2.200 3 8l6 5.800" fill="none" stroke="#666" stroke-width="1.900"/></svg>
<div class="abs" style="left:1259px;top:328px;width:90px;height:24px;background:#e2e2e2;border-bottom:2px solid #3c8fb0"></div>
<span class="t" style="left:1280.7px;top:333.7px;font-size:12.5px;color:#757575;font-weight:400;letter-spacing:0.801px;">Работы</span>
<div class="abs" style="left:1360px;top:328px;width:43px;height:24px;overflow:hidden"><span class="t" style="left:6.0px;top:5.7px;font-size:12.5px;color:#757575;font-weight:400;letter-spacing:1.023px;">Материалы</span></div>
<svg class="abs" style="left:1423px;top:332px" width="12" height="16" viewBox="0 0 12 16"><path d="M3 2.200 9 8l-6 5.800" fill="none" stroke="#111" stroke-width="2.100"/></svg>
<span class="t" style="left:1223.0px;top:380.1px;font-size:14px;color:#333;font-weight:400;letter-spacing:0.000px;">№</span>
<span class="t" style="left:1269.6px;top:358.9px;font-size:14px;color:#424242;font-weight:400;letter-spacing:0.137px;">Затраты труда</span>
<span class="t" style="left:1269.6px;top:379.8px;font-size:14px;color:#424242;font-weight:400;letter-spacing:0.245px;">рабочих</span>
<span class="t" style="left:1269.6px;top:400.6px;font-size:14px;color:#424242;font-weight:400;letter-spacing:0.283px;">(средний разм)</span>
<span class="t" style="left:1408.0px;top:369.1px;font-size:14px;color:#424242;font-weight:400;transform-origin:0 50%;transform:scaleX(1.092);">Ед/</span>
<span class="t" style="left:1408.0px;top:390.1px;font-size:14px;color:#424242;font-weight:400;transform-origin:0 50%;transform:scaleX(1.128);">изм</span>
<div class="abs" style="left:1207px;top:418px;width:248px;height:1px;background:#ddd"></div>
<span class="t" style="left:1263.0px;top:437.1px;font-size:14px;color:#333;font-weight:400;letter-spacing:0.150px;">Отсутствуют данные</span>
<span class="t" style="left:1253.0px;top:486.3px;font-size:16px;color:#b4b4b4;font-weight:400;letter-spacing:-0.046px;">Смета не рассчитана</span>
<div class="abs" style="left:1199px;top:531px;width:264px;height:46px;background:#fff"></div>
<span class="t" style="left:1207.0px;top:544.1px;font-size:12px;color:#222;font-weight:400;letter-spacing:0.207px;">Подзадачи (0)</span>
<div class="abs" style="left:1414px;top:541px;width:18px;height:18px;background:#c4c4c4;border-radius:2px"></div>
<svg class="abs" style="left:1414px;top:541px" width="18" height="18"><path d="M9 4.200v9.600M4.200 9h9.600" stroke="#fff" stroke-width="1.900"/></svg>
<svg class="abs" style="left:1441px;top:544px" width="16" height="12" viewBox="0 0 16 12"><path d="M2.200 9.200 8 3.400l5.800 5.800" fill="none" stroke="#555" stroke-width="1.900"/></svg>
<div class="abs" style="left:1199px;top:581px;width:264px;height:78px;background:#fff"></div>
<span class="t" style="left:1207.0px;top:594.1px;font-size:12px;color:#222;font-weight:400;letter-spacing:0.189px;">Назначенные (0)</span>
<svg class="abs" style="left:1410.5px;top:587.5px" width="25" height="25" viewBox="0 0 24 24" fill="#c2c2c2"><path d="M3 17.250V21h3.750L17.810 9.940l-3.750-3.750L3 17.250zM20.710 7.040a1 1 0 0 0 0-1.410l-2.340-2.340a1 1 0 0 0-1.410 0l-1.830 1.830 3.750 3.750 1.830-1.830z"/></svg>
<svg class="abs" style="left:1441px;top:594px" width="16" height="12" viewBox="0 0 16 12"><path d="M2.200 9.200 8 3.400l5.800 5.800" fill="none" stroke="#555" stroke-width="1.900"/></svg>
<svg class="abs" style="left:1198px;top:618px" width="266" height="35"><rect x="1.600" y="1.600" width="263" height="31.500" rx="6" fill="none" stroke="#3c9bbf" stroke-width="1.300" stroke-dasharray="2.400 2.800"/></svg>
<span class="t" style="left:1301.0px;top:628.9px;font-size:13.5px;color:#3c8fb0;font-weight:400;letter-spacing:-0.569px;">Назначить</span>
<div class="abs" style="left:1199px;top:663px;width:264px;height:21px;background:#fff"></div>
<div class="abs" style="left:1199px;top:663px;width:264px;height:18px;overflow:hidden"><span class="t" style="left:8.0px;top:12.1px;font-size:12px;color:#222;font-weight:400;letter-spacing:0.172px;">Модели (0)</span><div class="abs" style="left:215px;top:10px;width:18px;height:18px;background:#c4c4c4;border-radius:2px"></div><svg class="abs" style="left:242px;top:13px" width="16" height="12" viewBox="0 0 16 12"><path d="M2.200 9.200 8 3.400l5.800 5.800" fill="none" stroke="#555" stroke-width="1.900"/></svg></div>
<div class="abs" style="left:1191px;top:681px;width:288px;height:121px;background:#e9e9e9;border-radius:0 0 4px 4px;box-shadow:0 -1px 3px rgba(0,0,0,.35)"></div>
<div class="abs" style="left:1195.500px;top:685.500px;width:279.500px;height:113px;background:#fff;border:1px solid #555;border-radius:3px"></div>
<span class="t" style="left:1212.3px;top:696.1px;font-size:13.5px;color:#757575;font-weight:400;letter-spacing:-0.136px;">Напишите сообщение...</span>
<svg class="abs" style="left:1200px;top:778px" width="17" height="16" viewBox="0 0 17 16" fill="none" stroke="#666" stroke-width="1.200"><path d="M3 1v5M.5 3.500h5"/><path d="M3 8v6.500h12.500v-9H12l-1-1.500H7.500"/><circle cx="9.500" cy="10" r="2.500"/></svg>
<svg class="abs" style="left:1223px;top:778px" width="11" height="16" viewBox="0 0 11 16" fill="none" stroke="#666" stroke-width="1.200"><path d="M8.800 4v7.300a3.300 3.300 0 0 1-6.600 0V3.800a2.100 2.100 0 0 1 4.200 0v7.200a.9.900 0 0 1-1.800 0V4.500"/></svg>
<svg class="abs" style="left:1454px;top:776px" width="16" height="14" viewBox="0 0 16 14" fill="none" stroke="#888" stroke-width="1.200" stroke-linejoin="round"><path d="M1 1.200 15 7 1 12.800 3.200 7z"/><path d="M3.200 7h7"/></svg>
<div class="panel" style="left:1492px;top:37px;width:307px;height:775px"></div>
<div class="abs" style="left:1484px;top:37px;width:8px;height:775px;background:#6a6a6a"></div>
<svg class="abs" style="left:1502.7px;top:54px" width="17" height="14" viewBox="0 0 17 14" fill="#e6e6e6"><rect x="0" y="0" width="12.600" height="1.900"/><rect x="0" y="3.800" width="12.600" height="1.900"/><rect x="0" y="7.600" width="8.800" height="1.900"/><path d="M11.200 7.800 16.200 10.800 11.200 13.800z"/></svg>
<span class="t" style="left:1532.5px;top:54.9px;font-size:12.5px;color:#dcdcdc;font-weight:400;letter-spacing:-0.106px;">ЗАДАЧИ</span>
<svg class="abs" style="left:1679px;top:52px" width="18" height="18" viewBox="0 0 18 18" fill="none" stroke="#e6e6e6" stroke-width="2" stroke-linejoin="round"><path d="M1.800 1.800h14.400L10.500 9v7.200H7.500V9z"/></svg>
<svg class="abs" style="left:1705px;top:52px" width="18" height="18" viewBox="0 0 18 18" fill="none" stroke="#e6e6e6" stroke-width="1.600"><rect x="1.200" y="1.200" width="15.600" height="15.600"/><path d="M9 4.500v9M4.500 9h9" stroke-width="2"/></svg>
<div class="abs" style="left:1742px;top:49px;width:24px;height:24px;background:#8e8e8e"></div>
<svg class="abs" style="left:1742px;top:49px" width="24" height="24" viewBox="0 0 24 24" fill="none" stroke="#d2d2d2" stroke-width="1.400"><rect x="5" y="5" width="14" height="3.600" rx=".8"/><rect x="5" y="10.300" width="14" height="3.600" rx=".8"/><rect x="5" y="15.600" width="14" height="3.600" rx=".8"/></svg>
<svg class="abs" style="left:1773px;top:52px" width="18" height="18" viewBox="0 0 18 18" fill="none" stroke="#e6e6e6" stroke-width="1.500"><rect x="1.200" y="1.200" width="15.600" height="15.600"/><path d="M1.200 6.400h15.600M1.200 11.600h15.600M6 1.200v15.600"/></svg>
<div class="abs" style="left:1786px;top:83px;width:8px;height:720px;background:#6c6c6c"></div>
<div class="abs" style="left:1786px;top:404px;width:8px;height:399px;background:#3b93b3"></div>
<div class="card" style="top:91px;background:#fff"><div class="av"></div></div>
<span class="t" style="left:1513.2px;top:105.8px;font-size:11.5px;color:#fff;font-weight:700;letter-spacing:0.000px;">A</span>
<svg class="abs" style="left:1536.4px;top:103.5px" width="6" height="16" viewBox="0 0 6 16"><path d="M3 0 5.600 3.600H.4z" fill="#bdbdbd"/><path d="M3 5.800 5.600 9.400H.4z" fill="#bdbdbd"/><path d="M3 11.600 5.800 15.600H.2z" fill="#111"/></svg>
<span class="t" style="left:1549.3px;top:104.8px;font-size:12px;color:#ea5455;font-weight:700;letter-spacing:-0.228px;">Новая</span>
<span class="t" style="left:1756.5px;top:104.8px;font-size:12px;color:#333;font-weight:400;letter-spacing:0.046px;">P-4</span>
<span class="t" style="left:1696.4px;top:106.5px;font-size:10px;color:#222;font-weight:400;letter-spacing:0.104px;">20.10.2025</span>
<span class="t" style="left:1504.5px;top:132.1px;font-size:14px;color:#222;font-weight:400;letter-spacing:0.238px;">Задача с новой меткой</span>
<div class="card" style="top:181px;background:#fff"><div class="av"></div></div>
<span class="t" style="left:1513.2px;top:195.8px;font-size:11.5px;color:#fff;font-weight:700;letter-spacing:0.000px;">A</span>
<svg class="abs" style="left:1536.4px;top:193.5px" width="6" height="16" viewBox="0 0 6 16"><path d="M3 0 5.600 3.600H.4z" fill="#bdbdbd"/><path d="M3 5.800 5.600 9.400H.4z" fill="#bdbdbd"/><path d="M3 11.600 5.800 15.600H.2z" fill="#111"/></svg>
<span class="t" style="left:1549.3px;top:194.8px;font-size:12px;color:#ea5455;font-weight:700;letter-spacing:-0.228px;">Новая</span>
<span class="t" style="left:1749.7px;top:194.8px;font-size:12px;color:#333;font-weight:400;letter-spacing:0.074px;">P-16</span>
<span class="t" style="left:1689.6px;top:196.5px;font-size:10px;color:#222;font-weight:400;letter-spacing:0.269px;">11.11.2025</span>
<span class="t" style="left:1504.5px;top:222.1px;font-size:14px;color:#222;font-weight:400;letter-spacing:0.217px;">Новые вложения</span>
<div class="card" style="top:271px;background:#e0f6fd"><div class="av"></div></div>
<span class="t" style="left:1513.2px;top:285.8px;font-size:11.5px;color:#fff;font-weight:700;letter-spacing:0.000px;">A</span>
<svg class="abs" style="left:1536.4px;top:283.5px" width="6" height="16" viewBox="0 0 6 16"><path d="M3 0 5.600 3.600H.4z" fill="#bdbdbd"/><path d="M3 5.800 5.600 9.400H.4z" fill="#bdbdbd"/><path d="M3 11.600 5.800 15.600H.2z" fill="#111"/></svg>
<span class="t" style="left:1549.3px;top:284.8px;font-size:12px;color:#ea5455;font-weight:700;letter-spacing:-0.228px;">Новая</span>
<span class="t" style="left:1749.7px;top:284.8px;font-size:12px;color:#333;font-weight:400;letter-spacing:0.074px;">P-10</span>
<span class="t" style="left:1689.6px;top:286.5px;font-size:10px;color:#222;font-weight:400;letter-spacing:0.104px;">20.10.2025</span>
<span class="t" style="left:1504.5px;top:312.1px;font-size:14px;color:#222;font-weight:400;letter-spacing:0.321px;">новая смета</span>
<div class="card" style="top:361px;background:#fff"><div class="av"></div></div>
<span class="t" style="left:1513.2px;top:375.8px;font-size:11.5px;color:#fff;font-weight:700;letter-spacing:0.000px;">A</span>
<svg class="abs" style="left:1536.4px;top:373.5px" width="6" height="16" viewBox="0 0 6 16"><path d="M3 0 5.600 3.600H.4z" fill="#bdbdbd"/><path d="M3 5.800 5.600 9.400H.4z" fill="#bdbdbd"/><path d="M3 11.600 5.800 15.600H.2z" fill="#111"/></svg>
<span class="t" style="left:1549.3px;top:374.8px;font-size:12px;color:#ea5455;font-weight:700;letter-spacing:-0.228px;">Новая</span>
<span class="t" style="left:1749.7px;top:374.8px;font-size:12px;color:#333;font-weight:400;transform-origin:0 50%;transform:scaleX(1.048);">P-11</span>
<span class="t" style="left:1689.6px;top:376.5px;font-size:10px;color:#222;font-weight:400;letter-spacing:0.104px;">20.10.2025</span>
<span class="t" style="left:1504.5px;top:402.1px;font-size:14px;color:#222;font-weight:400;letter-spacing:0.213px;">Задача с проверками</span>
<div class="card" style="top:451px;background:#fff"><div class="av"></div></div>
<span class="t" style="left:1513.2px;top:465.8px;font-size:11.5px;color:#fff;font-weight:700;letter-spacing:0.000px;">A</span>
<svg class="abs" style="left:1536.4px;top:463.5px" width="6" height="16" viewBox="0 0 6 16"><path d="M3 0 5.600 3.600H.4z" fill="#bdbdbd"/><path d="M3 5.800 5.600 9.400H.4z" fill="#bdbdbd"/><path d="M3 11.600 5.800 15.600H.2z" fill="#111"/></svg>
<span class="t" style="left:1549.3px;top:464.8px;font-size:12px;color:#ea5455;font-weight:700;letter-spacing:-0.228px;">Новая</span>
<span class="t" style="left:1749.7px;top:464.8px;font-size:12px;color:#333;font-weight:400;letter-spacing:0.074px;">P-12</span>
<span class="t" style="left:1689.6px;top:466.5px;font-size:10px;color:#222;font-weight:400;letter-spacing:0.104px;">20.10.2025</span>
<span class="t" style="left:1504.5px;top:492.1px;font-size:14px;color:#222;font-weight:400;letter-spacing:0.343px;">Метка новая</span>
<div class="card" style="top:541px;background:#fff"><div class="av"></div></div>
<span class="t" style="left:1513.2px;top:555.8px;font-size:11.5px;color:#fff;font-weight:700;letter-spacing:0.000px;">A</span>
<svg class="abs" style="left:1536.4px;top:553.5px" width="6" height="16" viewBox="0 0 6 16"><path d="M3 0 5.600 3.600H.4z" fill="#bdbdbd"/><path d="M3 5.800 5.600 9.400H.4z" fill="#bdbdbd"/><path d="M3 11.600 5.800 15.600H.2z" fill="#111"/></svg>
<span class="t" style="left:1549.3px;top:554.8px;font-size:12px;color:#ea5455;font-weight:700;letter-spacing:-0.228px;">Новая</span>
<span class="t" style="left:1749.7px;top:554.8px;font-size:12px;color:#333;font-weight:400;letter-spacing:0.074px;">P-13</span>
<span class="t" style="left:1689.6px;top:556.5px;font-size:10px;color:#222;font-weight:400;letter-spacing:0.269px;">11.11.2025</span>
<span class="t" style="left:1504.5px;top:582.1px;font-size:14px;color:#222;font-weight:400;letter-spacing:0.233px;">Задача с 5 коллизиями</span>
<div class="card" style="top:631px;background:#fff"><div class="av"></div></div>
<span class="t" style="left:1513.2px;top:645.8px;font-size:11.5px;color:#fff;font-weight:700;letter-spacing:0.000px;">A</span>
<svg class="abs" style="left:1536.4px;top:643.5px" width="6" height="16" viewBox="0 0 6 16"><path d="M3 0 5.600 3.600H.4z" fill="#bdbdbd"/><path d="M3 5.800 5.600 9.400H.4z" fill="#bdbdbd"/><path d="M3 11.600 5.800 15.600H.2z" fill="#111"/></svg>
<span class="t" style="left:1549.3px;top:644.8px;font-size:12px;color:#ea5455;font-weight:700;letter-spacing:-0.228px;">Новая</span>
<span class="t" style="left:1749.7px;top:644.8px;font-size:12px;color:#333;font-weight:400;letter-spacing:0.074px;">P-14</span>
<span class="t" style="left:1689.6px;top:646.5px;font-size:10px;color:#222;font-weight:400;letter-spacing:0.269px;">11.11.2025</span>
<span class="t" style="left:1504.5px;top:672.1px;font-size:14px;color:#222;font-weight:400;letter-spacing:0.138px;">Задача для описания</span>
<div class="card" style="top:721px;background:#fff"><div class="av"></div></div>
<span class="t" style="left:1513.2px;top:735.8px;font-size:11.5px;color:#fff;font-weight:700;letter-spacing:0.000px;">A</span>
<svg class="abs" style="left:1536.4px;top:733.5px" width="6" height="16" viewBox="0 0 6 16"><path d="M3 0 5.600 3.600H.4z" fill="#bdbdbd"/><path d="M3 5.800 5.600 9.400H.4z" fill="#bdbdbd"/><path d="M3 11.600 5.800 15.600H.2z" fill="#111"/></svg>
<span class="t" style="left:1549.3px;top:734.8px;font-size:12px;color:#ea5455;font-weight:700;letter-spacing:-0.228px;">Новая</span>
<span class="t" style="left:1749.7px;top:734.8px;font-size:12px;color:#333;font-weight:400;letter-spacing:0.074px;">P-15</span>
<span class="t" style="left:1689.6px;top:736.5px;font-size:10px;color:#222;font-weight:400;letter-spacing:0.269px;">11.11.2025</span>
<span class="t" style="left:1504.5px;top:762.1px;font-size:14px;color:#222;font-weight:400;letter-spacing:0.257px;">Метка на модели</span>
<div class="abs" style="left:1807px;top:37px;width:37px;height:775px;background:#545454;box-shadow:0 2px 6px 1px rgba(0,0,0,.3)"></div>
<div class="abs" style="left:1807px;top:129.5px;width:37px;height:1.200px;background:#747474"></div>
<div class="abs" style="left:1807px;top:398px;width:37px;height:1.200px;background:#747474"></div>
<div class="abs" style="left:1807px;top:447.5px;width:37px;height:1.200px;background:#747474"></div>
<div class="abs" style="left:1807px;top:628px;width:37px;height:1.200px;background:#747474"></div>
<div class="abs" style="left:1807px;top:720.5px;width:37px;height:1.200px;background:#747474"></div>
<div class="abs" style="left:1809px;top:637.500px;width:32px;height:32px;background:#8e8e8e"></div>
<div class="abs" style="left:1809px;top:681px;width:32px;height:32px;background:#8e8e8e"></div>
<svg class="abs" style="left:1809.500px;top:45px" width="32" height="32" viewBox="0 0 32 32"><path d="M16 27V14M16 20l-4.500-4M16 18l4-3.500" fill="none" stroke="#e6e6e6" stroke-linecap="round" stroke-linejoin="round" stroke-width="1.500"/><path d="M12 22.500H9.500a5 5 0 0 1-1.200-9.800 8 8 0 0 1 15.400 0 5 5 0 0 1-1.200 9.800H20" fill="none" stroke="#e6e6e6" stroke-linecap="round" stroke-linejoin="round" stroke-width="1.600"/></svg>
<svg class="abs" style="left:1809.500px;top:88.5px" width="32" height="32" viewBox="0 0 32 32"><path d="M13 20.500H4.500V5h19.500v5.500M9 20.500v3h4" fill="none" stroke="#e6e6e6" stroke-linecap="round" stroke-linejoin="round" stroke-width="1.400"/><path d="M14 15.500V12h3.500M24 12h3.500v3.500M27.500 24v3.500H24M17.500 27.500H14V24" fill="none" stroke="#e6e6e6" stroke-linecap="round" stroke-linejoin="round" stroke-width="1.400"/><path d="M20.800 15.200l3.900 2.200v4.600l-3.900 2.200-3.900-2.200v-4.600z" fill="#e6e6e6"/></svg>
<svg class="abs" style="left:1809.500px;top:138px" width="32" height="32" viewBox="0 0 32 32"><rect x="5.500" y="10.500" width="21" height="8" fill="none" stroke="#e6e6e6" stroke-linecap="round" stroke-linejoin="round" stroke-width="1.300"/><path d="M9 18.500v-3.500M12.500 18.500v-3.500M16 18.500v-3.500M19.500 18.500v-3.500M23 18.500v-3.500" fill="none" stroke="#e6e6e6" stroke-linecap="round" stroke-linejoin="round" stroke-width="1"/><path d="M2.500 22.500v4h4z" fill="#e6e6e6"/></svg>
<svg class="abs" style="left:1809.500px;top:182px" width="32" height="32" viewBox="0 0 32 32"><path d="M3 20.500l14-7h13l-14 7z" fill="none" stroke="#e6e6e6" stroke-linecap="round" stroke-linejoin="round" stroke-width="1.300"/><path d="M12 27.500V11l9-7v16.500z" fill="#e6e6e6" stroke="#e6e6e6" stroke-width=".6"/><path d="M3 20.500l14-7h13l-14 7z" fill="none" stroke="#545454" stroke-width=".500"/></svg>
<svg class="abs" style="left:1809.500px;top:225.5px" width="32" height="32" viewBox="0 0 32 32"><path d="M4.500 9.500h17v17h-17zM4.500 9.500l6-5h17l-6 5M27.500 4.500v17l-6 5M10.500 4.500v17l-6 5M10.500 21.500h17" fill="none" stroke="#e6e6e6" stroke-linecap="round" stroke-linejoin="round" stroke-width="1.100"/><path d="M13.500 9.500l4-5h3.500v17l-4 5h-3.500z" fill="#e6e6e6" opacity=".85"/></svg>
<svg class="abs" style="left:1809.500px;top:270px" width="32" height="32" viewBox="0 0 32 32"><path d="M5.500 8l3-3.500h21v20.500h-24z" fill="none" stroke="#e6e6e6" stroke-linecap="round" stroke-linejoin="round" stroke-width="1.500"/><path d="M16 4.500v20.500M5.500 15h24" fill="none" stroke="#e6e6e6" stroke-linecap="round" stroke-linejoin="round" stroke-width="1.200" stroke-dasharray="2.500 1.600"/><path d="M22 25v-4h7.500" fill="none" stroke="#e6e6e6" stroke-linecap="round" stroke-linejoin="round" stroke-width="1.200"/><path d="M5.500 25l-1.500 2.500h24l1.500-2.500" fill="none" stroke="#e6e6e6" stroke-linecap="round" stroke-linejoin="round" stroke-width="1.200"/></svg>
<svg class="abs" style="left:1809.500px;top:314px" width="32" height="32" viewBox="0 0 32 32"><circle cx="16" cy="16" r="7" fill="none" stroke="#e6e6e6" stroke-linecap="round" stroke-linejoin="round" stroke-width="2.200"/><circle cx="16" cy="16" r="3.400" fill="#e6e6e6"/><path d="M16 5v3.500M16 23.500V27M5 16h3.500M23.500 16H27" fill="none" stroke="#e6e6e6" stroke-linecap="round" stroke-linejoin="round" stroke-width="1.600"/></svg>
<svg class="abs" style="left:1809.500px;top:357.5px" width="32" height="32" viewBox="0 0 32 32"><circle cx="16" cy="16" r="12.500" fill="none" stroke="#e6e6e6" stroke-linecap="round" stroke-linejoin="round" stroke-width="1.300"/><path d="M10.800 24V9.200M10.800 10.400c2.200-1.500 4.200-1.200 6.200-.3s4 1.200 6.200-.3v7.600c-2.200 1.500-4.200 1.200-6.200.3s-4-1.200-6.200.3" fill="none" stroke="#e6e6e6" stroke-linecap="round" stroke-linejoin="round" stroke-width="1.400"/></svg>
<svg class="abs" style="left:1809.500px;top:407px" width="32" height="32" viewBox="0 0 32 32"><path d="M4 22.500 29 8.500M4 12l25 12M5 29 27 14.500M13 8l10 16" fill="none" stroke="#e6e6e6" stroke-linecap="round" stroke-linejoin="round" stroke-width="1"/><text x="4" y="13" font-size="6" fill="#e6e6e6" font-family='"Liberation Sans",sans-serif'>1</text><text x="12.500" y="7.500" font-size="6" fill="#e6e6e6" font-family='"Liberation Sans",sans-serif'>2</text></svg>
<svg class="abs" style="left:1809.500px;top:455.5px" width="32" height="32" viewBox="0 0 32 32"><rect x="4.500" y="4.500" width="23" height="23" fill="none" stroke="#e6e6e6" stroke-linecap="round" stroke-linejoin="round" stroke-width="1.100" stroke-dasharray="2 1.800" stroke-linecap="butt"/><path d="M16 10l6 3.200v6.600L16 23l-6-3.200v-6.600zM10 13.200l6 3.200 6-3.200M16 16.400V23" fill="none" stroke="#e6e6e6" stroke-linecap="round" stroke-linejoin="round" stroke-width="1.200"/></svg>
<svg class="abs" style="left:1809.500px;top:499.5px" width="32" height="32" viewBox="0 0 32 32"><rect x="4.500" y="4.500" width="23" height="23" fill="none" stroke="#e6e6e6" stroke-linecap="round" stroke-linejoin="round" stroke-width="1.100" stroke-dasharray="2 1.800" stroke-linecap="butt"/><path d="M8.500 16c2-3.600 4.600-5.200 7.500-5.200s5.500 1.600 7.500 5.200c-2 3.600-4.600 5.200-7.500 5.200S10.500 19.600 8.500 16z" fill="#e6e6e6"/><circle cx="16" cy="16" r="3" fill="#545454"/><circle cx="16" cy="16" r="1.400" fill="#e6e6e6"/></svg>
<svg class="abs" style="left:1809.500px;top:543.5px" width="32" height="32" viewBox="0 0 32 32"><rect x="4.500" y="4.500" width="23" height="23" fill="none" stroke="#e6e6e6" stroke-linecap="round" stroke-linejoin="round" stroke-width="1.100" stroke-dasharray="2 1.800" stroke-linecap="butt"/><path d="M8.500 16c2-3.600 4.600-5.200 7.500-5.200s5.500 1.600 7.500 5.200c-2 3.600-4.600 5.200-7.500 5.200S10.500 19.600 8.500 16z" fill="#e6e6e6"/><circle cx="16" cy="16" r="3" fill="#545454"/><circle cx="16" cy="16" r="1.400" fill="#e6e6e6"/><path d="M9 8.500l14.500 15" stroke="#545454" stroke-width="3.400"/><path d="M9 8.500l14.500 15" fill="none" stroke="#e6e6e6" stroke-linecap="round" stroke-linejoin="round" stroke-width="1.600"/></svg>
<svg class="abs" style="left:1809.500px;top:589px" width="32" height="32" viewBox="0 0 32 32"><path d="M15 25.500H4.500v-21h21V13" fill="none" stroke="#e6e6e6" stroke-linecap="round" stroke-linejoin="round" stroke-width="1.100" stroke-dasharray="2 1.800" stroke-linecap="butt"/><rect x="16.500" y="14.500" width="14" height="14" fill="#e6e6e6"/><path d="M19.500 17.500l8 8M27.500 17.500l-8 8" stroke="#545454" stroke-width="1.600"/></svg>
<svg class="abs" style="left:1809.500px;top:637.5px" width="32" height="32" viewBox="0 0 32 32"><path d="M6.500 8l9.500 3.200v14.300L8 20.500z" fill="#fff"/><path d="M16 11.200 25.500 8 24 20.500l-8 5z" fill="#d4d4d4"/><path d="M6.500 8 16 5.500 25.500 8 16 11.200z" fill="#c4c4c4"/></svg>
<svg class="abs" style="left:1809.500px;top:681px" width="32" height="32" viewBox="0 0 32 32"><ellipse cx="16" cy="16" rx="11.500" ry="6" fill="none" stroke="#e6e6e6" stroke-linecap="round" stroke-linejoin="round" stroke-width="2.200" stroke="#fff"/><ellipse cx="16" cy="16" rx="5.500" ry="10" fill="none" stroke="#e6e6e6" stroke-linecap="round" stroke-linejoin="round" stroke-width="2.200" stroke="#fff"/><path d="M16 11v6M16 17l-3.500 3.500M16 17l3.500 3.500" fill="none" stroke="#e6e6e6" stroke-linecap="round" stroke-linejoin="round" stroke-width="1.100" stroke="#fff"/></svg>
<svg class="abs" style="left:0;top:0;pointer-events:none" width="1844" height="819" viewBox="0 0 1844 819"><defs><filter id="ash" x="-20%" y="-20%" width="140%" height="150%"><feGaussianBlur in="SourceAlpha" stdDeviation="2"/><feOffset dx="4" dy="4"/><feComponentTransfer><feFuncA type="linear" slope=".55"/></feComponentTransfer><feMerge><feMergeNode/><feMergeNode in="SourceGraphic"/></feMerge></filter></defs>
<g filter="url(#ash)" fill="#c00000" stroke="#c00000"><path d="M1047.300 256.500 914 317.500" stroke-width="3" fill="none"/><path d="M903.800 322.400 913.600 310 920 323.200z" stroke="none"/></g>
<g filter="url(#ash)" fill="#c00000" stroke="#c00000"><path d="M1304.500 165.500 1367 124.500" stroke-width="3" fill="none"/><path d="M1377.500 117.600 1361.300 119.300 1369 131.700z" stroke="none"/></g>
</svg>
</body></html>
